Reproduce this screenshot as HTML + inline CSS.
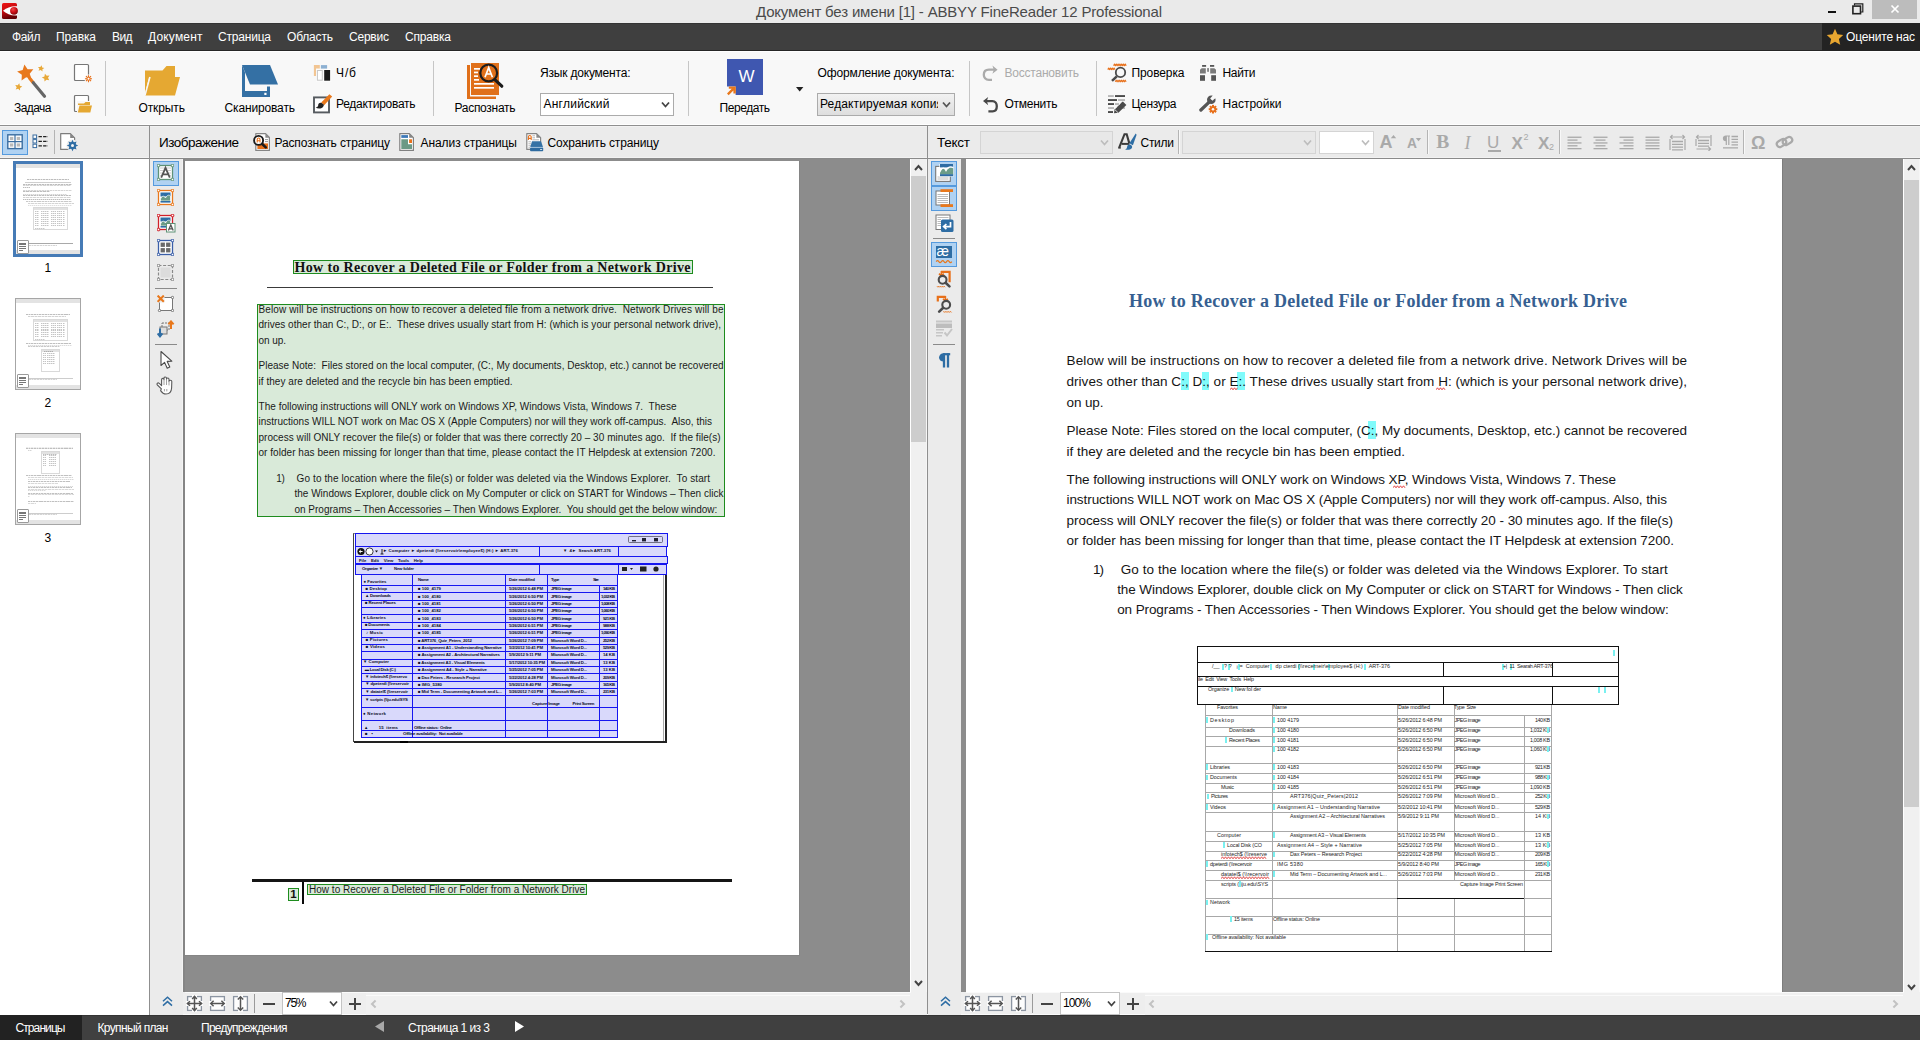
<!DOCTYPE html>
<html><head><meta charset="utf-8"><title>ABBYY FineReader 12 Professional</title>
<style>
html,body{margin:0;padding:0;}
body{width:1920px;height:1040px;overflow:hidden;position:relative;background:#fff;font-family:"Liberation Sans",sans-serif;font-size:13px;}
div,span.t,svg{position:absolute;}
span.t{white-space:pre;}
</style></head>
<body>
<div style="left:0px;top:0px;width:1920px;height:23px;background:#eaeaea;"></div>
<div style="left:0px;top:23px;width:1920px;height:28px;background:#3f3f3f;"></div>
<div style="left:0px;top:23px;width:1920px;height:1px;background:#343434;"></div>
<div style="left:0px;top:50px;width:1920px;height:1px;background:#262626;"></div>
<div style="left:0px;top:51px;width:1920px;height:74px;background:#f8f8f8;"></div>
<div style="left:0px;top:51px;width:1920px;height:1px;background:#ffffff;"></div>
<div style="left:0px;top:124px;width:1920px;height:1px;background:#ffffff;"></div>
<div style="left:0px;top:125px;width:1920px;height:1px;background:#8f8f8f;"></div>
<div style="left:0px;top:126px;width:1920px;height:31px;background:#ebebeb;"></div>
<div style="left:0px;top:126px;width:1920px;height:1px;background:#f2f2f2;"></div>
<div style="left:0px;top:157px;width:1920px;height:1px;background:#f2f2f2;"></div>
<div style="left:0px;top:158px;width:1920px;height:1px;background:#8a8a8a;"></div>
<svg style="left:2px;top:3px;" width="17" height="17" viewBox="0 0 17 17"><defs><linearGradient id="ai" x1="0" y1="0" x2="0.3" y2="1"><stop offset="0" stop-color="#f01414"/><stop offset="0.55" stop-color="#c00a0e"/><stop offset="1" stop-color="#620004"/></linearGradient><radialGradient id="ab" cx="0.38" cy="0.3" r="0.75"><stop offset="0" stop-color="#f04a4a"/><stop offset="0.5" stop-color="#d01018"/><stop offset="1" stop-color="#7a0206"/></radialGradient></defs>
<rect x="0" y="0" width="15" height="16" rx="1.6" fill="url(#ai)"/>
<path d="M1 7.7C5 4.4,9 2.9,15.2 3.2V12.4C9 12.8,5 11,1 7.7Z" fill="#fff"/>
<circle cx="12" cy="7.8" r="3.9" fill="url(#ab)"/></svg>
<span id="t1" class="t" style="left:756px;top:2px;font-size:15px;line-height:19px;color:#4a4a4a;letter-spacing:-0.177px;">Документ без имени [1] - ABBYY FineReader 12 Professional</span>
<div style="left:1828px;top:11px;width:8px;height:2px;background:#111;"></div>
<svg style="left:1852px;top:3px;" width="12" height="12" viewBox="0 0 12 12"><path d="M2.5 2.5V0.8H10.8V9H9" fill="none" stroke="#222" stroke-width="1.2"/><rect x="0.9" y="3.1" width="7.6" height="7.6" fill="none" stroke="#222" stroke-width="1.6"/></svg>
<div style="left:1872px;top:0px;width:45px;height:19px;background:#bcbcbc;"></div>
<svg style="left:1890px;top:4px;" width="11" height="11" viewBox="0 0 11 11"><path d="M1.5 1.5L8.5 8.5M8.5 1.5L1.5 8.5" stroke="#fff" stroke-width="1.7" fill="none"/></svg>
<span id="t2" class="t" style="left:12px;top:29px;font-size:12px;line-height:16px;color:#fff;letter-spacing:-0.339px;">Файл</span>
<span id="t3" class="t" style="left:56px;top:29px;font-size:12px;line-height:16px;color:#fff;letter-spacing:-0.109px;">Правка</span>
<span id="t4" class="t" style="left:112px;top:29px;font-size:12px;line-height:16px;color:#fff;letter-spacing:-0.609px;">Вид</span>
<span id="t5" class="t" style="left:148px;top:29px;font-size:12px;line-height:16px;color:#fff;letter-spacing:0.181px;">Документ</span>
<span id="t6" class="t" style="left:218px;top:29px;font-size:12px;line-height:16px;color:#fff;letter-spacing:-0.199px;">Страница</span>
<span id="t7" class="t" style="left:287px;top:29px;font-size:12px;line-height:16px;color:#fff;letter-spacing:-0.182px;">Область</span>
<span id="t8" class="t" style="left:349px;top:29px;font-size:12px;line-height:16px;color:#fff;letter-spacing:-0.219px;">Сервис</span>
<span id="t9" class="t" style="left:405px;top:29px;font-size:12px;line-height:16px;color:#fff;letter-spacing:-0.180px;">Справка</span>
<div style="left:1822px;top:23px;width:98px;height:28px;background:#232323;"></div>
<svg style="left:1826px;top:28px;" width="18" height="18" viewBox="0 0 18 18"><path d="M9 0.8L11.4 6.3L17.2 6.9L12.9 10.9L14.2 16.8L9 13.7L3.8 16.8L5.1 10.9L0.8 6.9L6.6 6.3Z" fill="#e8a630"/></svg>
<span id="t10" class="t" style="left:1846px;top:29px;font-size:12px;line-height:16px;color:#fff;letter-spacing:-0.175px;">Оцените нас</span>
<div style="left:105px;top:61px;width:1px;height:55px;background:#c6c6c6;"></div>
<div style="left:433px;top:61px;width:1px;height:55px;background:#c6c6c6;"></div>
<div style="left:688px;top:61px;width:1px;height:55px;background:#c6c6c6;"></div>
<div style="left:969px;top:61px;width:1px;height:55px;background:#c6c6c6;"></div>
<div style="left:1096px;top:61px;width:1px;height:55px;background:#c6c6c6;"></div>
<span id="t11" class="t" style="left:14px;top:100px;font-size:12px;line-height:16px;color:#000;letter-spacing:-0.553px;">Задача</span>
<span id="t12" class="t" style="left:138.5px;top:100px;font-size:12px;line-height:16px;color:#000;letter-spacing:-0.107px;">Открыть</span>
<span id="t13" class="t" style="left:224.5px;top:100px;font-size:12px;line-height:16px;color:#000;letter-spacing:-0.144px;">Сканировать</span>
<span id="t14" class="t" style="left:454.5px;top:100px;font-size:12px;line-height:16px;color:#000;letter-spacing:-0.290px;">Распознать</span>
<span id="t15" class="t" style="left:719.5px;top:100px;font-size:12px;line-height:16px;color:#000;letter-spacing:-0.435px;">Передать</span>
<span id="t16" class="t" style="left:336px;top:65px;font-size:12px;line-height:16px;color:#000;letter-spacing:0.891px;">Ч/б</span>
<span id="t17" class="t" style="left:336px;top:96px;font-size:12px;line-height:16px;color:#000;letter-spacing:-0.284px;">Редактировать</span>
<span id="t18" class="t" style="left:540px;top:65px;font-size:12px;line-height:16px;color:#000;letter-spacing:-0.195px;">Язык документа:</span>
<span id="t19" class="t" style="left:817.5px;top:65px;font-size:12px;line-height:16px;color:#000;letter-spacing:-0.134px;">Оформление документа:</span>
<span id="t20" class="t" style="left:1004.5px;top:65px;font-size:12px;line-height:16px;color:#ababab;letter-spacing:-0.213px;">Восстановить</span>
<span id="t21" class="t" style="left:1004.5px;top:96px;font-size:12px;line-height:16px;color:#000;letter-spacing:-0.263px;">Отменить</span>
<span id="t22" class="t" style="left:1131.5px;top:65px;font-size:12px;line-height:16px;color:#000;letter-spacing:-0.107px;">Проверка</span>
<span id="t23" class="t" style="left:1131.5px;top:96px;font-size:12px;line-height:16px;color:#000;letter-spacing:-0.294px;">Цензура</span>
<span id="t24" class="t" style="left:1222.5px;top:65px;font-size:12px;line-height:16px;color:#000;letter-spacing:-0.312px;">Найти</span>
<span id="t25" class="t" style="left:1222.5px;top:96px;font-size:12px;line-height:16px;color:#000;letter-spacing:0.020px;">Настройки</span>
<div style="left:540px;top:93px;width:134px;height:23px;background:#fff;border:1px solid #ababab;box-sizing:border-box;"></div>
<span id="t26" class="t" style="left:543.5px;top:96px;font-size:12px;line-height:16px;color:#000;letter-spacing:0.243px;">Английский</span>
<svg style="left:661px;top:101px;" width="9" height="8" viewBox="0 0 9 8"><path d="M1 1.5L4.5 5.5L8 1.5" fill="none" stroke="#444" stroke-width="1.8"/></svg>
<div style="left:817px;top:93px;width:138px;height:23px;background:linear-gradient(#f2f2f2,#dedede);border:1px solid #ababab;box-sizing:border-box;"></div>
<div style="left:820px;top:95px;width:118px;height:18px;overflow:hidden;background:none">
<span id="t27" class="t" style="left:0px;top:1px;font-size:12px;line-height:16px;color:#000;letter-spacing:0.125px;">Редактируемая копия</span>
</div>
<svg style="left:942px;top:101px;" width="9" height="8" viewBox="0 0 9 8"><path d="M1 1.5L4.5 5.5L8 1.5" fill="none" stroke="#555" stroke-width="1.8"/></svg>
<svg style="left:10px;top:60px;" width="42" height="42" viewBox="0 0 42 42"><path d="M14.40 4.48L17.57 9.29L23.33 9.23L19.74 13.73L21.57 19.19L16.18 17.16L11.56 20.59L11.83 14.84L7.13 11.51L12.68 9.98Z" fill="#e8781c"/>
<path d="M31.59 5.15L32.15 7.39L34.37 8.03L32.41 9.25L32.49 11.56L30.72 10.08L28.55 10.86L29.42 8.72L28.00 6.90L30.30 7.06Z" fill="#e8a838"/><path d="M34.91 13.64L36.72 15.83L39.52 15.41L38.00 17.80L39.26 20.34L36.52 19.63L34.49 21.62L34.32 18.79L31.81 17.48L34.45 16.44Z" fill="#e8a838"/><path d="M9.29 23.28L9.84 25.80L12.28 26.60L10.06 27.90L10.05 30.47L8.13 28.76L5.68 29.54L6.71 27.19L5.21 25.10L7.77 25.36Z" fill="#e8a838"/>
<path d="M19 17.5L23.5 23" stroke="#e8781c" stroke-width="3.2"/><path d="M23.3 22.7L34.5 36.2" stroke="#666" stroke-width="3.2" stroke-linecap="round"/></svg>
<svg style="left:73px;top:63px;" width="20" height="20" viewBox="0 0 20 20"><rect x="1.5" y="1.5" width="14" height="16" rx="1" fill="#fff" stroke="#777" stroke-width="1.2"/><circle cx="15.5" cy="15.7" r="4.2" fill="#f8f8f8"/><g stroke="#e8701a" stroke-width="1.1"><path d="M15.5 12.2V19.2M12 15.7H19M13 13.2L18 18.2M18 13.2L13 18.2"/></g><circle cx="15.5" cy="15.7" r="1.5" fill="#fff" stroke="#e8701a" stroke-width="1"/></svg>
<svg style="left:73px;top:94px;" width="20" height="20" viewBox="0 0 20 20"><rect x="1.5" y="1.5" width="14" height="16" rx="1" fill="#fff" stroke="#777" stroke-width="1.2"/><rect x="4" y="7" width="16" height="12" fill="#f8f8f8"/><path d="M5 9.5H11L12.5 8H17V11H5Z" fill="#e5a832"/><path d="M6.5 11.5H19L17.3 18.5H4.8Z" fill="#e5a832"/></svg>
<svg style="left:144px;top:65px;" width="38" height="32" viewBox="0 0 38 32"><path d="M1 5.5H18.5L22.5 1H31V12H1Z" fill="#e5a832"/><path d="M1 12V28L5 12Z" fill="#e5a832"/><path d="M6 12H36L31 30.6H1Z" fill="#e5a832"/><path d="M1 30.6L6 12" stroke="#f8f8f8" stroke-width="1.4"/></svg>
<svg style="left:241px;top:64px;" width="40" height="35" viewBox="0 0 40 35"><path d="M1 1H29L37 20.5H9Z" fill="#3470a4"/><path d="M1 1V33H29V22.5H26V27H4V8.5Z" fill="#3470a4"/><rect x="23.3" y="28.8" width="2.2" height="2.2" fill="#fff"/></svg>
<svg style="left:312px;top:64px;" width="20" height="18" viewBox="0 0 20 18"><path d="M1.9 1.1H7.8V4.6H4V11.9H1.9Z" fill="#f2c592"/><rect x="8.9" y="1.1" width="6.2" height="3.5" fill="#8cb0d2"/><rect x="4" y="5" width="15.2" height="12.8" fill="#fcfcfc"/><rect x="5.4" y="6.5" width="4.9" height="9.7" fill="#fff" stroke="#c6c6c6" stroke-width="1"/><rect x="12.2" y="6" width="5.9" height="10.7" fill="#1a1a1a"/></svg>
<svg style="left:312px;top:94px;" width="21" height="20" viewBox="0 0 21 20"><rect x="2" y="3.4" width="15" height="15" fill="#fff" stroke="#565b60" stroke-width="1.9"/><path d="M17.4 0.2L20.2 2.6L12.2 11.2L9.2 8.6Z" fill="#e8781c"/><path d="M9.6 8.9C7.4 8.4 6.1 9.8 6.2 11.2C6.2 12.6 5 13.2 3.6 13.4C5.6 15 9.2 14.8 10.8 13.2C11.9 12.1 12 10.8 11.7 10.6Z" fill="#222"/></svg>
<svg style="left:466px;top:62px;" width="40" height="40" viewBox="0 0 40 40"><path d="M1 3V37H30V34.5H4V3Z" fill="#e0701a"/><rect x="5" y="1" width="28" height="32" fill="#e0701a"/><rect x="8" y="6" width="6" height="1.7" fill="#fff"/><rect x="8" y="9.6" width="4" height="1.7" fill="#fff"/><rect x="8" y="13.3" width="4" height="1.7" fill="#fff"/><rect x="8" y="17" width="5" height="1.7" fill="#fff"/><rect x="8" y="21" width="20" height="1.7" fill="#fff"/><rect x="8" y="25" width="20" height="1.7" fill="#fff"/><circle cx="22.7" cy="11" r="8.4" fill="#e0701a" stroke="#1c1c1c" stroke-width="2.2"/><path d="M19 15.3L22.7 5.6L26.4 15.3M20.4 12H25" stroke="#fff" stroke-width="1.7" fill="none"/><path d="M28.8 17.6L35.8 24.2" stroke="#1c1c1c" stroke-width="3.2" stroke-linecap="round"/></svg>
<svg style="left:727px;top:59px;" width="37" height="37" viewBox="0 0 37 37"><rect x="0" y="0" width="36" height="36" fill="#3f57b0"/><rect x="0" y="27.5" width="8.6" height="8.6" fill="#f8f8f8"/><path d="M0.8 35.4L7 29.2M1.8 28.6H7.6V34.4" stroke="#e8781c" stroke-width="2.4" fill="none"/></svg>
<span id="t28" class="t" style="left:738.5px;top:66.5px;font-size:17px;line-height:20px;color:#fff;letter-spacing:-2.047px;">W</span>
<svg style="left:795px;top:86px;" width="10" height="7" viewBox="0 0 10 7"><path d="M1 1H8.4L4.7 5.4Z" fill="#222"/></svg>
<svg style="left:982px;top:64px;" width="17" height="19" viewBox="0 0 17 19"><path d="M10 15.8H6.9C3.4 15.8 1.8 13.2 1.8 10.7C1.8 8.1 3.4 5.7 6.9 5.7H13.6" fill="none" stroke="#ababab" stroke-width="2.3"/><path d="M10.4 1.6L15.6 5.7L10.4 9.8L11.8 5.7Z" fill="#ababab"/></svg>
<svg style="left:982px;top:95px;" width="17" height="19" viewBox="0 0 17 19"><path d="M6.4 16.3H10.6C13.6 16.3 14.8 13.8 14.8 11.2C14.8 8.6 13.4 6.1 10.4 6.1H3" fill="none" stroke="#484848" stroke-width="2.3"/><path d="M6.2 2L1 6.1L6.2 10.2L4.8 6.1Z" fill="#484848"/></svg>
<svg style="left:1107px;top:63px;" width="21" height="20" viewBox="0 0 21 20"><path d="M6.6 2.7L7.5 1.1L8.4 2.7L9.3 1.1L10.2 2.7L11.1 1.1L12.0 2.7L12.9 1.1L13.8 2.7L14.7 1.1L15.6 2.7L16.5 1.1L17.4 2.7L18.3 1.1L19.2 2.7M0.8 6.6L1.7 5.0L2.6 6.6L3.5 5.0L4.4 6.6L5.3 5.0L6.2 6.6L7.1 5.0L8.0 6.6M8.3 18.8L9.2 17.2L10.1 18.8L11.0 17.2L11.9 18.8L12.8 17.2L13.7 18.8L14.6 17.2L15.5 18.8L16.4 17.2L17.3 18.8L18.2 17.2L19.1 18.8" stroke="#e8701a" stroke-width="1.15" fill="none" stroke-linejoin="round"/><circle cx="13.5" cy="9.4" r="4.7" fill="#f8f8f8" stroke="#4a4a4a" stroke-width="1.8"/><path d="M9.8 13.3L5 17.9" stroke="#4a4a4a" stroke-width="2.5"/></svg>
<svg style="left:1107px;top:94px;" width="21" height="20" viewBox="0 0 21 20"><g fill="#4a4a4a"><rect x="8" y="1.1" width="10" height="1.9"/><rect x="1" y="5.1" width="9" height="1.9"/><rect x="1" y="9.1" width="6" height="1.9"/><rect x="1" y="17.1" width="5" height="1.9"/></g><g fill="#b8b8b8"><rect x="1" y="1.1" width="5.8" height="1.9"/><rect x="11" y="5.1" width="7" height="1.9"/><rect x="8" y="9.1" width="4" height="1.9"/><rect x="1" y="13.1" width="6" height="1.9"/><rect x="15" y="13.1" width="3" height="1.9"/></g><path d="M15.6 7.2L19.4 11L11.4 18.8L7 19.2L7.6 15.2Z" fill="#4a4a4a"/><path d="M7.6 15.2L15.6 7.2" stroke="#f8f8f8" stroke-width="1" stroke-dasharray="1.2 0.8"/><path d="M7.8 15.6L11 18.6" stroke="#f8f8f8" stroke-width=".8"/></svg>
<svg style="left:1199px;top:64px;" width="19" height="18" viewBox="0 0 19 18"><g fill="#555"><rect x="3.1" y="1" width="4" height="1.8"/><rect x="11" y="1" width="4.2" height="1.8"/><rect x="1" y="11.2" width="5" height="5.6"/><rect x="12.2" y="11.2" width="4.8" height="5.6"/></g><g fill="#7a7a7a"><path d="M1 5.8L2.6 4.3H6.8V9.6H1Z"/><path d="M11.2 4.3H15.4L17 5.8V9.6H11.2Z"/><rect x="8.2" y="4.1" width="1.7" height="3.7"/></g></svg>
<svg style="left:1199px;top:94px;" width="20" height="20" viewBox="0 0 20 20"><path d="M1.9 16L9.6 8.6" stroke="#555" stroke-width="3.3" stroke-linecap="round"/><circle cx="12.3" cy="5.8" r="4.3" fill="#555"/><path d="M12.3 5.8L15.6 -0.4L19.6 3.2Z" fill="#f8f8f8"/><rect x="-1.7" y="-5.4" width="3.4" height="5.6" transform="translate(12.5 5.4) rotate(42)" fill="#f8f8f8"/><g transform="translate(14 15.2)" fill="#e8701a"><rect x="-1" y="-4.3" width="2" height="8.6" transform="rotate(0)"/><rect x="-1" y="-4.3" width="2" height="8.6" transform="rotate(45)"/><rect x="-1" y="-4.3" width="2" height="8.6" transform="rotate(90)"/><rect x="-1" y="-4.3" width="2" height="8.6" transform="rotate(135)"/><circle r="3"/><circle r="1.25" fill="#f8f8f8"/></g></svg>
<div style="left:0px;top:159px;width:149px;height:856px;background:#fff;"></div>
<div style="left:149px;top:126px;width:1px;height:889px;background:#8f8f8f;"></div>
<div style="left:150px;top:159px;width:33px;height:833px;background:#ebebeb;"></div>
<div style="left:182px;top:159px;width:1px;height:833px;background:#f3f3f3;"></div>
<div style="left:183px;top:159px;width:2px;height:833px;background:#858585;"></div>
<div style="left:185px;top:159px;width:725px;height:833px;background:#8c8c8c;"></div>
<div style="left:185px;top:161px;width:614px;height:794px;background:#fff;"></div>
<div style="left:799px;top:161px;width:1px;height:795px;background:#858585;"></div>
<div style="left:185px;top:955px;width:615px;height:1px;background:#858585;"></div>
<div style="left:910px;top:159px;width:1px;height:833px;background:#fff;"></div>
<div style="left:911px;top:159px;width:15px;height:833px;background:#f0f0f0;"></div>
<div style="left:911px;top:176px;width:15px;height:266px;background:#cdcdcd;"></div>
<div style="left:926px;top:159px;width:1px;height:833px;background:#f6f6f6;"></div>
<div style="left:927px;top:126px;width:1px;height:889px;background:#8f8f8f;"></div>
<div style="left:928px;top:159px;width:33px;height:833px;background:#ebebeb;"></div>
<div style="left:961px;top:159px;width:5px;height:833px;background:#8c8c8c;"></div>
<div style="left:966px;top:159px;width:816px;height:833px;background:#fff;"></div>
<div style="left:1782px;top:159px;width:1px;height:833px;background:#7c7c7c;"></div>
<div style="left:1783px;top:159px;width:120px;height:833px;background:#8c8c8c;"></div>
<div style="left:1903px;top:159px;width:1px;height:833px;background:#fff;"></div>
<div style="left:1904px;top:159px;width:15px;height:833px;background:#f0f0f0;"></div>
<div style="left:1904px;top:180px;width:15px;height:627px;background:#cdcdcd;"></div>
<div style="left:1919px;top:159px;width:1px;height:833px;background:#f6f6f6;"></div>
<svg style="left:914px;top:164px;" width="9" height="8" viewBox="0 0 9 8"><path d="M1 6L4.5 2L8 6" fill="none" stroke="#444" stroke-width="2"/></svg>
<svg style="left:914px;top:979px;" width="9" height="8" viewBox="0 0 9 8"><path d="M1 2L4.5 6L8 2" fill="none" stroke="#444" stroke-width="2"/></svg>
<svg style="left:1907px;top:164px;" width="9" height="8" viewBox="0 0 9 8"><path d="M1 6L4.5 2L8 6" fill="none" stroke="#444" stroke-width="2"/></svg>
<svg style="left:1907px;top:983px;" width="9" height="8" viewBox="0 0 9 8"><path d="M1 2L4.5 6L8 2" fill="none" stroke="#444" stroke-width="2"/></svg>
<div style="left:150px;top:992px;width:1770px;height:23px;background:#eeeeee;"></div>
<div style="left:150px;top:1014px;width:1770px;height:1px;background:#fafafa;"></div>
<div style="left:150px;top:992px;width:33px;height:23px;background:#ebebeb;"></div>
<div style="left:928px;top:992px;width:33px;height:23px;background:#ebebeb;"></div>
<div style="left:366px;top:992px;width:561px;height:23px;background:#f0f0f0;"></div>
<div style="left:1145px;top:992px;width:775px;height:23px;background:#f0f0f0;"></div>
<div style="left:185px;top:992px;width:726px;height:1px;background:#fafafa;"></div>
<div style="left:966px;top:992px;width:938px;height:1px;background:#fafafa;"></div>
<div style="left:366px;top:995px;width:544px;height:1px;background:#fafafa;"></div>
<div style="left:1145px;top:995px;width:758px;height:1px;background:#fafafa;"></div>
<svg style="left:162px;top:996px;" width="11" height="11" viewBox="0 0 11 11"><path d="M1 5.2L5.5 1.2L10 5.2M1 9.6L5.5 5.6L10 9.6" fill="none" stroke="#2e6da4" stroke-width="1.5"/></svg>
<svg style="left:186px;top:995px;" width="17" height="17" viewBox="0 0 17 17"><rect x="1.6" y="1.6" width="13.8" height="13.8" fill="#fdfdfd" stroke="#8c95a2" stroke-width="1.3"/><rect x="6" y="0" width="5" height="17" fill="#fdfdfd"/><rect x="0" y="6" width="17" height="5" fill="#fdfdfd"/><path d="M8.5 1.5V15.5M1.5 8.5H15.5" fill="none" stroke="#555" stroke-width="1.5"/><path d="M6.2 4L8.5 1.4L10.8 4M6.2 13L8.5 15.6L10.8 13M4 6.2L1.4 8.5L4 10.8M13 6.2L15.6 8.5L13 10.8" fill="none" stroke="#555" stroke-width="1.5"/></svg>
<svg style="left:209px;top:995px;" width="17" height="17" viewBox="0 0 17 17"><rect x="1.6" y="1.6" width="13.8" height="13.8" fill="#fdfdfd" stroke="#8c95a2" stroke-width="1.3"/><rect x="0" y="6" width="17" height="5" fill="#fdfdfd"/><path d="M2 8.5H15" fill="none" stroke="#555" stroke-width="1.5"/><path d="M4.6 5.8L1.8 8.5L4.6 11.2M12.4 5.8L15.2 8.5L12.4 11.2" fill="none" stroke="#555" stroke-width="1.5"/></svg>
<svg style="left:232px;top:995px;" width="17" height="17" viewBox="0 0 17 17"><rect x="1.6" y="1.6" width="13.8" height="13.8" fill="#fdfdfd" stroke="#8c95a2" stroke-width="1.3"/><rect x="6" y="0" width="5" height="17" fill="#fdfdfd"/><path d="M8.5 2V15" fill="none" stroke="#555" stroke-width="1.5"/><path d="M5.8 4.6L8.5 1.8L11.2 4.6M5.8 12.4L8.5 15.2L11.2 12.4" fill="none" stroke="#555" stroke-width="1.5"/></svg>
<div style="left:254px;top:994px;width:1px;height:19px;background:#9a9a9a;"></div>
<div style="left:263px;top:1003px;width:12px;height:2px;background:#444;"></div>
<div style="left:282px;top:992px;width:60px;height:23px;background:#fff;border:1px solid #c4c4c4;box-sizing:border-box;"></div>
<span id="t29" class="t" style="left:285px;top:995px;font-size:12px;line-height:16px;color:#000;letter-spacing:-1.266px;">75%</span>
<svg style="left:329px;top:1000px;" width="9" height="8" viewBox="0 0 9 8"><path d="M1 1.5L4.5 5.5L8 1.5" fill="none" stroke="#444" stroke-width="1.8"/></svg>
<div style="left:349px;top:1003px;width:12px;height:2px;background:#444;"></div>
<div style="left:354px;top:998px;width:2px;height:12px;background:#444;"></div>
<svg style="left:370px;top:999px;" width="8" height="10" viewBox="0 0 8 10"><path d="M5.6 1.6L2 5L5.6 8.4" fill="none" stroke="#c2c2c2" stroke-width="2"/></svg>
<svg style="left:940px;top:996px;" width="11" height="11" viewBox="0 0 11 11"><path d="M1 5.2L5.5 1.2L10 5.2M1 9.6L5.5 5.6L10 9.6" fill="none" stroke="#2e6da4" stroke-width="1.5"/></svg>
<svg style="left:964px;top:995px;" width="17" height="17" viewBox="0 0 17 17"><rect x="1.6" y="1.6" width="13.8" height="13.8" fill="#fdfdfd" stroke="#8c95a2" stroke-width="1.3"/><rect x="6" y="0" width="5" height="17" fill="#fdfdfd"/><rect x="0" y="6" width="17" height="5" fill="#fdfdfd"/><path d="M8.5 1.5V15.5M1.5 8.5H15.5" fill="none" stroke="#555" stroke-width="1.5"/><path d="M6.2 4L8.5 1.4L10.8 4M6.2 13L8.5 15.6L10.8 13M4 6.2L1.4 8.5L4 10.8M13 6.2L15.6 8.5L13 10.8" fill="none" stroke="#555" stroke-width="1.5"/></svg>
<svg style="left:987px;top:995px;" width="17" height="17" viewBox="0 0 17 17"><rect x="1.6" y="1.6" width="13.8" height="13.8" fill="#fdfdfd" stroke="#8c95a2" stroke-width="1.3"/><rect x="0" y="6" width="17" height="5" fill="#fdfdfd"/><path d="M2 8.5H15" fill="none" stroke="#555" stroke-width="1.5"/><path d="M4.6 5.8L1.8 8.5L4.6 11.2M12.4 5.8L15.2 8.5L12.4 11.2" fill="none" stroke="#555" stroke-width="1.5"/></svg>
<svg style="left:1010px;top:995px;" width="17" height="17" viewBox="0 0 17 17"><rect x="1.6" y="1.6" width="13.8" height="13.8" fill="#fdfdfd" stroke="#8c95a2" stroke-width="1.3"/><rect x="6" y="0" width="5" height="17" fill="#fdfdfd"/><path d="M8.5 2V15" fill="none" stroke="#555" stroke-width="1.5"/><path d="M5.8 4.6L8.5 1.8L11.2 4.6M5.8 12.4L8.5 15.2L11.2 12.4" fill="none" stroke="#555" stroke-width="1.5"/></svg>
<div style="left:1032px;top:994px;width:1px;height:19px;background:#9a9a9a;"></div>
<div style="left:1041px;top:1003px;width:12px;height:2px;background:#444;"></div>
<div style="left:1060px;top:992px;width:60px;height:23px;background:#fff;border:1px solid #c4c4c4;box-sizing:border-box;"></div>
<span id="t30" class="t" style="left:1063px;top:995px;font-size:12px;line-height:16px;color:#000;letter-spacing:-0.901px;">100%</span>
<svg style="left:1107px;top:1000px;" width="9" height="8" viewBox="0 0 9 8"><path d="M1 1.5L4.5 5.5L8 1.5" fill="none" stroke="#444" stroke-width="1.8"/></svg>
<div style="left:1127px;top:1003px;width:12px;height:2px;background:#444;"></div>
<div style="left:1132px;top:998px;width:2px;height:12px;background:#444;"></div>
<svg style="left:1148px;top:999px;" width="8" height="10" viewBox="0 0 8 10"><path d="M5.6 1.6L2 5L5.6 8.4" fill="none" stroke="#c2c2c2" stroke-width="2"/></svg>
<div style="left:149px;top:992px;width:1px;height:22px;background:#8f8f8f;"></div>
<div style="left:927px;top:992px;width:1px;height:22px;background:#8f8f8f;"></div>
<svg style="left:898px;top:999px;" width="8" height="10" viewBox="0 0 8 10"><path d="M2.4 1.6L6 5L2.4 8.4" fill="none" stroke="#c2c2c2" stroke-width="2"/></svg>
<svg style="left:1891px;top:999px;" width="8" height="10" viewBox="0 0 8 10"><path d="M2.4 1.6L6 5L2.4 8.4" fill="none" stroke="#c2c2c2" stroke-width="2"/></svg>
<div style="left:0px;top:1015px;width:1920px;height:25px;background:#404040;"></div>
<div style="left:0px;top:1015px;width:1920px;height:1px;background:#343434;"></div>
<div style="left:0px;top:1015px;width:82px;height:25px;background:#222;"></div>
<span id="t31" class="t" style="left:15.5px;top:1020px;font-size:12px;line-height:16px;color:#fff;letter-spacing:-0.906px;">Страницы</span>
<span id="t32" class="t" style="left:97.5px;top:1020px;font-size:12px;line-height:16px;color:#fff;letter-spacing:-0.648px;">Крупный план</span>
<span id="t33" class="t" style="left:201px;top:1020px;font-size:12px;line-height:16px;color:#fff;letter-spacing:-0.727px;">Предупреждения</span>
<svg style="left:374px;top:1020px;" width="11" height="13" viewBox="0 0 11 13"><path d="M10 1V12L1 6.5Z" fill="#a8a8a8"/></svg>
<span id="t34" class="t" style="left:408px;top:1020px;font-size:12px;line-height:16px;color:#fff;letter-spacing:-0.568px;">Страница 1 из 3</span>
<svg style="left:514px;top:1020px;" width="11" height="13" viewBox="0 0 11 13"><path d="M1 1V12L10 6.5Z" fill="#fff"/></svg>
<div style="left:2px;top:130px;width:26px;height:25px;background:#b0d2f2;border:1px solid #559add;box-sizing:border-box;"></div>
<svg style="left:7px;top:134px;" width="16" height="16" viewBox="0 0 16 16"><rect x="0.8" y="0.8" width="14.4" height="13.8" fill="#fff" stroke="#3a6da0" stroke-width="1.4"/><path d="M8 1V14.6M1 7.7H15" stroke="#3a6da0" stroke-width="1.2"/><g fill="#b9b9b9"><rect x="2.9" y="2.9" width="3.4" height="3.2"/><rect x="9.7" y="2.9" width="3.4" height="3.2"/><rect x="2.9" y="9.4" width="3.4" height="3.2"/><rect x="9.7" y="9.4" width="3.4" height="3.2"/></g></svg>
<svg style="left:32px;top:134px;" width="17" height="15" viewBox="0 0 17 15"><g fill="#fff" stroke="#3a6da0" stroke-width="1"><rect x="1" y="1" width="3.6" height="3.4"/><rect x="1" y="5.6" width="3.6" height="3.4"/><rect x="1" y="10.2" width="3.6" height="3.4"/></g><g stroke="#222" stroke-width="1.2" stroke-dasharray="3.4 1.2"><path d="M6.5 2.7H16M6.5 7.3H16M6.5 11.9H16"/></g></svg>
<div style="left:54px;top:130px;width:1px;height:24px;background:#b4b4b4;"></div>
<svg style="left:59px;top:132px;" width="20" height="20" viewBox="0 0 20 20"><path d="M1.7 1.6H11.4L15.6 5.8V17.4H1.7Z" fill="#fff" stroke="#7c7c7c" stroke-width="1.2" stroke-linejoin="round"/><path d="M11.2 1.6V6H15.6Z" fill="#858585"/><circle cx="13.5" cy="13.5" r="6" fill="#ebebeb"/><g transform="translate(13.5 13.5)" fill="#2e6da4"><path d="M-1.3 -3L0 -5.7L1.3 -3V3L0 5.7L-1.3 3Z" transform="rotate(0)"/><path d="M-1.3 -3L0 -5.7L1.3 -3V3L0 5.7L-1.3 3Z" transform="rotate(45)"/><path d="M-1.3 -3L0 -5.7L1.3 -3V3L0 5.7L-1.3 3Z" transform="rotate(90)"/><path d="M-1.3 -3L0 -5.7L1.3 -3V3L0 5.7L-1.3 3Z" transform="rotate(135)"/><circle r="3.5"/><circle r="1.5" fill="#f4f4f4"/></g></svg>
<span id="t35" class="t" style="left:159px;top:134px;font-size:13.5px;line-height:18px;color:#000;letter-spacing:-0.505px;">Изображение</span>
<span id="t36" class="t" style="left:274.5px;top:135px;font-size:12px;line-height:16px;color:#000;letter-spacing:-0.138px;">Распознать страницу</span>
<span id="t37" class="t" style="left:420.5px;top:135px;font-size:12px;line-height:16px;color:#000;letter-spacing:-0.074px;">Анализ страницы</span>
<span id="t38" class="t" style="left:547.5px;top:135px;font-size:12px;line-height:16px;color:#000;letter-spacing:-0.148px;">Сохранить страницу</span>
<svg style="left:252px;top:132px;" width="20" height="20" viewBox="0 0 20 20"><path d="M3.8 1.7H13.6L17.4 5.5V18.4H3.8Z" fill="#fff" stroke="#858585" stroke-width="1.2" stroke-linejoin="round"/><path d="M13.4 1.7V5.7H17.4Z" fill="#8a8a8a"/><path d="M13 7.6H16M13 9.6H16" stroke="#9a9a9a" stroke-width="1"/><rect x="5.4" y="11.4" width="10.6" height="5.6" fill="#e8701a"/><circle cx="6.6" cy="8.4" r="4.5" fill="#fff" stroke="#1c1c1c" stroke-width="1.9"/><path d="M5.2 10.6V7.4C5.2 5.6 8 5.6 8 7.4V10.6M5.2 8.8H8" stroke="#e8701a" stroke-width="1.1" fill="none"/><path d="M10.2 12L13.8 15.4" stroke="#1c1c1c" stroke-width="2.6" stroke-linecap="round"/></svg>
<svg style="left:398px;top:132px;" width="18" height="20" viewBox="0 0 18 20"><path d="M1.8 1.6H11.4L15.4 5.6V18.4H1.8Z" fill="#fff" stroke="#808080" stroke-width="1.2" stroke-linejoin="round"/><path d="M11.2 1.6V5.8H15.4Z" fill="#858585"/><rect x="3.3" y="3.1" width="6.7" height="2.8" fill="#3e79b8"/><path d="M3.3 7.3H10V12.2H14V17H3.3Z" fill="#6b9985"/><rect x="11.1" y="7.3" width="2.9" height="3.7" fill="#e8701a"/></svg>
<svg style="left:525px;top:132px;" width="20" height="20" viewBox="0 0 20 20"><path d="M1.8 1.6H11.6L15.6 5.6V17.4H1.8Z" fill="#fff" stroke="#858585" stroke-width="1.2" stroke-linejoin="round"/><path d="M11.4 1.6V5.8H15.6Z" fill="#8a8a8a"/><path d="M3.4 8V4.9C3.4 3.1 6.2 3.1 6.2 4.9V8M3.4 6.4H6.2" stroke="#e8701a" stroke-width="1.1" fill="none"/><path d="M7.4 3.8H10M7.4 5.8H10M7.4 7.8H14M3.4 9.8H6M3.4 11.8H6M3.4 13.8H6M3.4 15.8H5" stroke="#b5b5b5" stroke-width="1"/><path d="M7 9.2H16L18 14.9H5.3Z" fill="#3572a5"/><rect x="5.3" y="14.9" width="12.7" height="1.2" fill="#9bbbd6"/><path d="M5.1 16.1H18.2V18.4Q18.2 19.2 17.4 19.2H5.9Q5.1 19.2 5.1 18.4Z" fill="#2e6ba0"/><rect x="15" y="17.2" width="2.2" height="0.9" rx=".4" fill="#fff"/></svg>
<div style="left:13px;top:161px;width:70px;height:96px;background:#467bb6;"></div>
<div style="left:16px;top:164px;width:64px;height:90px;background:#fff;"></div>
<div style="left:16px;top:164px;width:64px;height:4px;background:#e3e3e3;"></div>
<div style="left:16px;top:250px;width:64px;height:4px;background:#e3e3e3;"></div>
<div style="left:27px;top:179px;width:42px;height:1px;background:repeating-linear-gradient(90deg,rgba(60,60,60,0.34) 0 1.7px,rgba(60,60,60,0.15) 1.7px 2.7px);"></div>
<div style="left:24.5px;top:181.5px;width:46.5px;height:1px;background:#cfcfcf;"></div>
<div style="left:23px;top:184px;width:49px;height:1px;background:repeating-linear-gradient(90deg,rgba(60,60,60,0.34) 0 1.7px,rgba(60,60,60,0.15) 1.7px 2.7px);"></div>
<div style="left:23px;top:185px;width:48px;height:1px;background:repeating-linear-gradient(90deg,rgba(60,60,60,0.22) 0 2.4px,rgba(60,60,60,0.10) 2.4px 3.4px);"></div>
<div style="left:23px;top:187px;width:7px;height:1px;background:repeating-linear-gradient(90deg,rgba(60,60,60,0.34) 0 1.0px,rgba(60,60,60,0.15) 1.0px 2.0px);"></div>
<div style="left:23px;top:190px;width:49px;height:1px;background:repeating-linear-gradient(90deg,rgba(60,60,60,0.22) 0 1.7px,rgba(60,60,60,0.10) 1.7px 2.7px);"></div>
<div style="left:23px;top:191px;width:27px;height:1px;background:repeating-linear-gradient(90deg,rgba(60,60,60,0.34) 0 2.4px,rgba(60,60,60,0.15) 2.4px 3.4px);"></div>
<div style="left:23px;top:194px;width:44px;height:1px;background:repeating-linear-gradient(90deg,rgba(60,60,60,0.22) 0 1.0px,rgba(60,60,60,0.10) 1.0px 2.0px);"></div>
<div style="left:23px;top:195px;width:48px;height:1px;background:repeating-linear-gradient(90deg,rgba(60,60,60,0.34) 0 1.7px,rgba(60,60,60,0.15) 1.7px 2.7px);"></div>
<div style="left:23px;top:197px;width:48px;height:1px;background:repeating-linear-gradient(90deg,rgba(60,60,60,0.22) 0 2.4px,rgba(60,60,60,0.10) 2.4px 3.4px);"></div>
<div style="left:23px;top:199px;width:48px;height:1px;background:repeating-linear-gradient(90deg,rgba(60,60,60,0.34) 0 1.0px,rgba(60,60,60,0.15) 1.0px 2.0px);"></div>
<div style="left:26px;top:201px;width:46px;height:1px;background:repeating-linear-gradient(90deg,rgba(60,60,60,0.28) 0 1.7px,rgba(60,60,60,0.12) 1.7px 2.7px);"></div>
<div style="left:27.5px;top:203px;width:46px;height:1px;background:repeating-linear-gradient(90deg,rgba(60,60,60,0.22) 0 2.4px,rgba(60,60,60,0.10) 2.4px 3.4px);"></div>
<div style="left:27.5px;top:205px;width:44px;height:1px;background:repeating-linear-gradient(90deg,rgba(60,60,60,0.17) 0 1.0px,rgba(60,60,60,0.07) 1.0px 2.0px);"></div>
<div style="left:33px;top:207px;width:34.5px;height:22.5px;background:#fff;border:1px solid #d9d9d9;box-sizing:border-box;"></div>
<div style="left:34px;top:208px;width:32.5px;height:2px;background:#e2e2e2;"></div>
<div style="left:35px;top:211px;width:4px;height:1px;background:repeating-linear-gradient(90deg,rgba(60,60,60,0.30) 0 1.0px,rgba(60,60,60,0.14) 1.0px 2.0px);"></div>
<div style="left:41px;top:211px;width:8px;height:1px;background:repeating-linear-gradient(90deg,rgba(60,60,60,0.30) 0 1.0px,rgba(60,60,60,0.14) 1.0px 2.0px);"></div>
<div style="left:51px;top:211px;width:5px;height:1px;background:repeating-linear-gradient(90deg,rgba(60,60,60,0.30) 0 1.0px,rgba(60,60,60,0.14) 1.0px 2.0px);"></div>
<div style="left:57px;top:211px;width:5px;height:1px;background:repeating-linear-gradient(90deg,rgba(60,60,60,0.30) 0 1.0px,rgba(60,60,60,0.14) 1.0px 2.0px);"></div>
<div style="left:63px;top:211px;width:2px;height:1px;background:repeating-linear-gradient(90deg,rgba(60,60,60,0.30) 0 1.0px,rgba(60,60,60,0.14) 1.0px 2.0px);"></div>
<div style="left:35px;top:213px;width:4px;height:1px;background:repeating-linear-gradient(90deg,rgba(60,60,60,0.30) 0 1.0px,rgba(60,60,60,0.14) 1.0px 2.0px);"></div>
<div style="left:41px;top:213px;width:8px;height:1px;background:repeating-linear-gradient(90deg,rgba(60,60,60,0.30) 0 1.0px,rgba(60,60,60,0.14) 1.0px 2.0px);"></div>
<div style="left:51px;top:213px;width:5px;height:1px;background:repeating-linear-gradient(90deg,rgba(60,60,60,0.30) 0 1.0px,rgba(60,60,60,0.14) 1.0px 2.0px);"></div>
<div style="left:57px;top:213px;width:5px;height:1px;background:repeating-linear-gradient(90deg,rgba(60,60,60,0.30) 0 1.0px,rgba(60,60,60,0.14) 1.0px 2.0px);"></div>
<div style="left:63px;top:213px;width:2px;height:1px;background:repeating-linear-gradient(90deg,rgba(60,60,60,0.30) 0 1.0px,rgba(60,60,60,0.14) 1.0px 2.0px);"></div>
<div style="left:35px;top:215px;width:4px;height:1px;background:repeating-linear-gradient(90deg,rgba(60,60,60,0.30) 0 1.0px,rgba(60,60,60,0.14) 1.0px 2.0px);"></div>
<div style="left:41px;top:215px;width:8px;height:1px;background:repeating-linear-gradient(90deg,rgba(60,60,60,0.30) 0 1.0px,rgba(60,60,60,0.14) 1.0px 2.0px);"></div>
<div style="left:51px;top:215px;width:5px;height:1px;background:repeating-linear-gradient(90deg,rgba(60,60,60,0.30) 0 1.0px,rgba(60,60,60,0.14) 1.0px 2.0px);"></div>
<div style="left:57px;top:215px;width:5px;height:1px;background:repeating-linear-gradient(90deg,rgba(60,60,60,0.30) 0 1.0px,rgba(60,60,60,0.14) 1.0px 2.0px);"></div>
<div style="left:63px;top:215px;width:2px;height:1px;background:repeating-linear-gradient(90deg,rgba(60,60,60,0.30) 0 1.0px,rgba(60,60,60,0.14) 1.0px 2.0px);"></div>
<div style="left:35px;top:217px;width:4px;height:1px;background:repeating-linear-gradient(90deg,rgba(60,60,60,0.30) 0 1.0px,rgba(60,60,60,0.14) 1.0px 2.0px);"></div>
<div style="left:41px;top:217px;width:8px;height:1px;background:repeating-linear-gradient(90deg,rgba(60,60,60,0.30) 0 1.0px,rgba(60,60,60,0.14) 1.0px 2.0px);"></div>
<div style="left:51px;top:217px;width:5px;height:1px;background:repeating-linear-gradient(90deg,rgba(60,60,60,0.30) 0 1.0px,rgba(60,60,60,0.14) 1.0px 2.0px);"></div>
<div style="left:57px;top:217px;width:5px;height:1px;background:repeating-linear-gradient(90deg,rgba(60,60,60,0.30) 0 1.0px,rgba(60,60,60,0.14) 1.0px 2.0px);"></div>
<div style="left:63px;top:217px;width:2px;height:1px;background:repeating-linear-gradient(90deg,rgba(60,60,60,0.30) 0 1.0px,rgba(60,60,60,0.14) 1.0px 2.0px);"></div>
<div style="left:35px;top:219px;width:4px;height:1px;background:repeating-linear-gradient(90deg,rgba(60,60,60,0.30) 0 1.0px,rgba(60,60,60,0.14) 1.0px 2.0px);"></div>
<div style="left:41px;top:219px;width:8px;height:1px;background:repeating-linear-gradient(90deg,rgba(60,60,60,0.30) 0 1.0px,rgba(60,60,60,0.14) 1.0px 2.0px);"></div>
<div style="left:51px;top:219px;width:5px;height:1px;background:repeating-linear-gradient(90deg,rgba(60,60,60,0.30) 0 1.0px,rgba(60,60,60,0.14) 1.0px 2.0px);"></div>
<div style="left:57px;top:219px;width:5px;height:1px;background:repeating-linear-gradient(90deg,rgba(60,60,60,0.30) 0 1.0px,rgba(60,60,60,0.14) 1.0px 2.0px);"></div>
<div style="left:63px;top:219px;width:2px;height:1px;background:repeating-linear-gradient(90deg,rgba(60,60,60,0.30) 0 1.0px,rgba(60,60,60,0.14) 1.0px 2.0px);"></div>
<div style="left:35px;top:221px;width:4px;height:1px;background:repeating-linear-gradient(90deg,rgba(60,60,60,0.30) 0 1.0px,rgba(60,60,60,0.14) 1.0px 2.0px);"></div>
<div style="left:41px;top:221px;width:8px;height:1px;background:repeating-linear-gradient(90deg,rgba(60,60,60,0.30) 0 1.0px,rgba(60,60,60,0.14) 1.0px 2.0px);"></div>
<div style="left:51px;top:221px;width:5px;height:1px;background:repeating-linear-gradient(90deg,rgba(60,60,60,0.30) 0 1.0px,rgba(60,60,60,0.14) 1.0px 2.0px);"></div>
<div style="left:57px;top:221px;width:5px;height:1px;background:repeating-linear-gradient(90deg,rgba(60,60,60,0.30) 0 1.0px,rgba(60,60,60,0.14) 1.0px 2.0px);"></div>
<div style="left:63px;top:221px;width:2px;height:1px;background:repeating-linear-gradient(90deg,rgba(60,60,60,0.30) 0 1.0px,rgba(60,60,60,0.14) 1.0px 2.0px);"></div>
<div style="left:35px;top:223px;width:4px;height:1px;background:repeating-linear-gradient(90deg,rgba(60,60,60,0.30) 0 1.0px,rgba(60,60,60,0.14) 1.0px 2.0px);"></div>
<div style="left:41px;top:223px;width:8px;height:1px;background:repeating-linear-gradient(90deg,rgba(60,60,60,0.30) 0 1.0px,rgba(60,60,60,0.14) 1.0px 2.0px);"></div>
<div style="left:51px;top:223px;width:5px;height:1px;background:repeating-linear-gradient(90deg,rgba(60,60,60,0.30) 0 1.0px,rgba(60,60,60,0.14) 1.0px 2.0px);"></div>
<div style="left:57px;top:223px;width:5px;height:1px;background:repeating-linear-gradient(90deg,rgba(60,60,60,0.30) 0 1.0px,rgba(60,60,60,0.14) 1.0px 2.0px);"></div>
<div style="left:63px;top:223px;width:2px;height:1px;background:repeating-linear-gradient(90deg,rgba(60,60,60,0.30) 0 1.0px,rgba(60,60,60,0.14) 1.0px 2.0px);"></div>
<div style="left:35px;top:225px;width:4px;height:1px;background:repeating-linear-gradient(90deg,rgba(60,60,60,0.30) 0 1.0px,rgba(60,60,60,0.14) 1.0px 2.0px);"></div>
<div style="left:41px;top:225px;width:8px;height:1px;background:repeating-linear-gradient(90deg,rgba(60,60,60,0.30) 0 1.0px,rgba(60,60,60,0.14) 1.0px 2.0px);"></div>
<div style="left:51px;top:225px;width:5px;height:1px;background:repeating-linear-gradient(90deg,rgba(60,60,60,0.30) 0 1.0px,rgba(60,60,60,0.14) 1.0px 2.0px);"></div>
<div style="left:57px;top:225px;width:5px;height:1px;background:repeating-linear-gradient(90deg,rgba(60,60,60,0.30) 0 1.0px,rgba(60,60,60,0.14) 1.0px 2.0px);"></div>
<div style="left:63px;top:225px;width:2px;height:1px;background:repeating-linear-gradient(90deg,rgba(60,60,60,0.30) 0 1.0px,rgba(60,60,60,0.14) 1.0px 2.0px);"></div>
<div style="left:35px;top:228px;width:10px;height:1px;background:repeating-linear-gradient(90deg,rgba(60,60,60,0.28) 0 1.0px,rgba(60,60,60,0.12) 1.0px 2.0px);"></div>
<div style="left:29px;top:243.4px;width:44px;height:1px;background:#a9a9a9;"></div>
<div style="left:29px;top:245px;width:28px;height:1px;background:repeating-linear-gradient(90deg,rgba(60,60,60,0.22) 0 1.7px,rgba(60,60,60,0.10) 1.7px 2.7px);"></div>
<div style="left:16.5px;top:239.5px;width:12.5px;height:14.5px;background:#fff;border:1px solid #9a9a9a;box-sizing:border-box;border-radius:1px;"></div>
<div style="left:19px;top:242.5px;width:7px;height:2px;background:#777;"></div>
<div style="left:19px;top:246px;width:7px;height:1px;background:#777;"></div>
<div style="left:19px;top:248px;width:7px;height:1px;background:#777;"></div>
<div style="left:19px;top:250px;width:4px;height:1px;background:#777;"></div>
<div style="left:15px;top:298px;width:66px;height:92px;background:#fff;border:1px solid #a6a6a6;box-sizing:border-box;"></div>
<div style="left:16px;top:299px;width:64px;height:4px;background:#e3e3e3;"></div>
<div style="left:16px;top:385px;width:64px;height:4px;background:#e3e3e3;"></div>
<div style="left:26px;top:314px;width:44px;height:1px;background:repeating-linear-gradient(90deg,rgba(60,60,60,0.33) 0 1.7px,rgba(60,60,60,0.15) 1.7px 2.7px);"></div>
<div style="left:28px;top:316px;width:38px;height:1px;background:repeating-linear-gradient(90deg,rgba(60,60,60,0.23) 0 2.4px,rgba(60,60,60,0.10) 2.4px 3.4px);"></div>
<div style="left:33px;top:318.5px;width:34.5px;height:22.5px;background:#fff;border:1px solid #d9d9d9;box-sizing:border-box;"></div>
<div style="left:34px;top:319.5px;width:32.5px;height:2px;background:#e2e2e2;"></div>
<div style="left:35px;top:323px;width:4px;height:1px;background:repeating-linear-gradient(90deg,rgba(60,60,60,0.30) 0 1.0px,rgba(60,60,60,0.14) 1.0px 2.0px);"></div>
<div style="left:41px;top:323px;width:8px;height:1px;background:repeating-linear-gradient(90deg,rgba(60,60,60,0.30) 0 1.0px,rgba(60,60,60,0.14) 1.0px 2.0px);"></div>
<div style="left:51px;top:323px;width:5px;height:1px;background:repeating-linear-gradient(90deg,rgba(60,60,60,0.30) 0 1.0px,rgba(60,60,60,0.14) 1.0px 2.0px);"></div>
<div style="left:57px;top:323px;width:5px;height:1px;background:repeating-linear-gradient(90deg,rgba(60,60,60,0.30) 0 1.0px,rgba(60,60,60,0.14) 1.0px 2.0px);"></div>
<div style="left:63px;top:323px;width:2px;height:1px;background:repeating-linear-gradient(90deg,rgba(60,60,60,0.30) 0 1.0px,rgba(60,60,60,0.14) 1.0px 2.0px);"></div>
<div style="left:35px;top:325px;width:4px;height:1px;background:repeating-linear-gradient(90deg,rgba(60,60,60,0.30) 0 1.0px,rgba(60,60,60,0.14) 1.0px 2.0px);"></div>
<div style="left:41px;top:325px;width:8px;height:1px;background:repeating-linear-gradient(90deg,rgba(60,60,60,0.30) 0 1.0px,rgba(60,60,60,0.14) 1.0px 2.0px);"></div>
<div style="left:51px;top:325px;width:5px;height:1px;background:repeating-linear-gradient(90deg,rgba(60,60,60,0.30) 0 1.0px,rgba(60,60,60,0.14) 1.0px 2.0px);"></div>
<div style="left:57px;top:325px;width:5px;height:1px;background:repeating-linear-gradient(90deg,rgba(60,60,60,0.30) 0 1.0px,rgba(60,60,60,0.14) 1.0px 2.0px);"></div>
<div style="left:63px;top:325px;width:2px;height:1px;background:repeating-linear-gradient(90deg,rgba(60,60,60,0.30) 0 1.0px,rgba(60,60,60,0.14) 1.0px 2.0px);"></div>
<div style="left:35px;top:327px;width:4px;height:1px;background:repeating-linear-gradient(90deg,rgba(60,60,60,0.30) 0 1.0px,rgba(60,60,60,0.14) 1.0px 2.0px);"></div>
<div style="left:41px;top:327px;width:8px;height:1px;background:repeating-linear-gradient(90deg,rgba(60,60,60,0.30) 0 1.0px,rgba(60,60,60,0.14) 1.0px 2.0px);"></div>
<div style="left:51px;top:327px;width:5px;height:1px;background:repeating-linear-gradient(90deg,rgba(60,60,60,0.30) 0 1.0px,rgba(60,60,60,0.14) 1.0px 2.0px);"></div>
<div style="left:57px;top:327px;width:5px;height:1px;background:repeating-linear-gradient(90deg,rgba(60,60,60,0.30) 0 1.0px,rgba(60,60,60,0.14) 1.0px 2.0px);"></div>
<div style="left:63px;top:327px;width:2px;height:1px;background:repeating-linear-gradient(90deg,rgba(60,60,60,0.30) 0 1.0px,rgba(60,60,60,0.14) 1.0px 2.0px);"></div>
<div style="left:35px;top:329px;width:4px;height:1px;background:repeating-linear-gradient(90deg,rgba(60,60,60,0.30) 0 1.0px,rgba(60,60,60,0.14) 1.0px 2.0px);"></div>
<div style="left:41px;top:329px;width:8px;height:1px;background:repeating-linear-gradient(90deg,rgba(60,60,60,0.30) 0 1.0px,rgba(60,60,60,0.14) 1.0px 2.0px);"></div>
<div style="left:51px;top:329px;width:5px;height:1px;background:repeating-linear-gradient(90deg,rgba(60,60,60,0.30) 0 1.0px,rgba(60,60,60,0.14) 1.0px 2.0px);"></div>
<div style="left:57px;top:329px;width:5px;height:1px;background:repeating-linear-gradient(90deg,rgba(60,60,60,0.30) 0 1.0px,rgba(60,60,60,0.14) 1.0px 2.0px);"></div>
<div style="left:63px;top:329px;width:2px;height:1px;background:repeating-linear-gradient(90deg,rgba(60,60,60,0.30) 0 1.0px,rgba(60,60,60,0.14) 1.0px 2.0px);"></div>
<div style="left:35px;top:330px;width:4px;height:1px;background:repeating-linear-gradient(90deg,rgba(60,60,60,0.30) 0 1.0px,rgba(60,60,60,0.14) 1.0px 2.0px);"></div>
<div style="left:41px;top:330px;width:8px;height:1px;background:repeating-linear-gradient(90deg,rgba(60,60,60,0.30) 0 1.0px,rgba(60,60,60,0.14) 1.0px 2.0px);"></div>
<div style="left:51px;top:330px;width:5px;height:1px;background:repeating-linear-gradient(90deg,rgba(60,60,60,0.30) 0 1.0px,rgba(60,60,60,0.14) 1.0px 2.0px);"></div>
<div style="left:57px;top:330px;width:5px;height:1px;background:repeating-linear-gradient(90deg,rgba(60,60,60,0.30) 0 1.0px,rgba(60,60,60,0.14) 1.0px 2.0px);"></div>
<div style="left:63px;top:330px;width:2px;height:1px;background:repeating-linear-gradient(90deg,rgba(60,60,60,0.30) 0 1.0px,rgba(60,60,60,0.14) 1.0px 2.0px);"></div>
<div style="left:35px;top:332px;width:4px;height:1px;background:repeating-linear-gradient(90deg,rgba(60,60,60,0.30) 0 1.0px,rgba(60,60,60,0.14) 1.0px 2.0px);"></div>
<div style="left:41px;top:332px;width:8px;height:1px;background:repeating-linear-gradient(90deg,rgba(60,60,60,0.30) 0 1.0px,rgba(60,60,60,0.14) 1.0px 2.0px);"></div>
<div style="left:51px;top:332px;width:5px;height:1px;background:repeating-linear-gradient(90deg,rgba(60,60,60,0.30) 0 1.0px,rgba(60,60,60,0.14) 1.0px 2.0px);"></div>
<div style="left:57px;top:332px;width:5px;height:1px;background:repeating-linear-gradient(90deg,rgba(60,60,60,0.30) 0 1.0px,rgba(60,60,60,0.14) 1.0px 2.0px);"></div>
<div style="left:63px;top:332px;width:2px;height:1px;background:repeating-linear-gradient(90deg,rgba(60,60,60,0.30) 0 1.0px,rgba(60,60,60,0.14) 1.0px 2.0px);"></div>
<div style="left:35px;top:334px;width:4px;height:1px;background:repeating-linear-gradient(90deg,rgba(60,60,60,0.30) 0 1.0px,rgba(60,60,60,0.14) 1.0px 2.0px);"></div>
<div style="left:41px;top:334px;width:8px;height:1px;background:repeating-linear-gradient(90deg,rgba(60,60,60,0.30) 0 1.0px,rgba(60,60,60,0.14) 1.0px 2.0px);"></div>
<div style="left:51px;top:334px;width:5px;height:1px;background:repeating-linear-gradient(90deg,rgba(60,60,60,0.30) 0 1.0px,rgba(60,60,60,0.14) 1.0px 2.0px);"></div>
<div style="left:57px;top:334px;width:5px;height:1px;background:repeating-linear-gradient(90deg,rgba(60,60,60,0.30) 0 1.0px,rgba(60,60,60,0.14) 1.0px 2.0px);"></div>
<div style="left:63px;top:334px;width:2px;height:1px;background:repeating-linear-gradient(90deg,rgba(60,60,60,0.30) 0 1.0px,rgba(60,60,60,0.14) 1.0px 2.0px);"></div>
<div style="left:35px;top:336px;width:4px;height:1px;background:repeating-linear-gradient(90deg,rgba(60,60,60,0.30) 0 1.0px,rgba(60,60,60,0.14) 1.0px 2.0px);"></div>
<div style="left:41px;top:336px;width:8px;height:1px;background:repeating-linear-gradient(90deg,rgba(60,60,60,0.30) 0 1.0px,rgba(60,60,60,0.14) 1.0px 2.0px);"></div>
<div style="left:51px;top:336px;width:5px;height:1px;background:repeating-linear-gradient(90deg,rgba(60,60,60,0.30) 0 1.0px,rgba(60,60,60,0.14) 1.0px 2.0px);"></div>
<div style="left:57px;top:336px;width:5px;height:1px;background:repeating-linear-gradient(90deg,rgba(60,60,60,0.30) 0 1.0px,rgba(60,60,60,0.14) 1.0px 2.0px);"></div>
<div style="left:63px;top:336px;width:2px;height:1px;background:repeating-linear-gradient(90deg,rgba(60,60,60,0.30) 0 1.0px,rgba(60,60,60,0.14) 1.0px 2.0px);"></div>
<div style="left:35px;top:339px;width:10px;height:1px;background:repeating-linear-gradient(90deg,rgba(60,60,60,0.28) 0 1.0px,rgba(60,60,60,0.12) 1.0px 2.0px);"></div>
<div style="left:26px;top:343px;width:45px;height:1px;background:repeating-linear-gradient(90deg,rgba(60,60,60,0.33) 0 1.7px,rgba(60,60,60,0.15) 1.7px 2.7px);"></div>
<div style="left:28px;top:345px;width:44px;height:1px;background:repeating-linear-gradient(90deg,rgba(60,60,60,0.18) 0 1.0px,rgba(60,60,60,0.08) 1.0px 2.0px);"></div>
<div style="left:28px;top:346px;width:32px;height:1px;background:repeating-linear-gradient(90deg,rgba(60,60,60,0.28) 0 1.7px,rgba(60,60,60,0.12) 1.7px 2.7px);"></div>
<div style="left:41px;top:349px;width:19px;height:22.5px;background:#fff;border:1px solid #d9d9d9;box-sizing:border-box;"></div>
<div style="left:42px;top:350px;width:17px;height:2px;background:#e2e2e2;"></div>
<div style="left:43px;top:353px;width:3px;height:1px;background:repeating-linear-gradient(90deg,rgba(60,60,60,0.30) 0 1.0px,rgba(60,60,60,0.14) 1.0px 2.0px);"></div>
<div style="left:47px;top:353px;width:8px;height:1px;background:repeating-linear-gradient(90deg,rgba(60,60,60,0.30) 0 1.0px,rgba(60,60,60,0.14) 1.0px 2.0px);"></div>
<div style="left:43px;top:355px;width:3px;height:1px;background:repeating-linear-gradient(90deg,rgba(60,60,60,0.30) 0 1.0px,rgba(60,60,60,0.14) 1.0px 2.0px);"></div>
<div style="left:47px;top:355px;width:8px;height:1px;background:repeating-linear-gradient(90deg,rgba(60,60,60,0.30) 0 1.0px,rgba(60,60,60,0.14) 1.0px 2.0px);"></div>
<div style="left:43px;top:357px;width:3px;height:1px;background:repeating-linear-gradient(90deg,rgba(60,60,60,0.30) 0 1.0px,rgba(60,60,60,0.14) 1.0px 2.0px);"></div>
<div style="left:47px;top:357px;width:8px;height:1px;background:repeating-linear-gradient(90deg,rgba(60,60,60,0.30) 0 1.0px,rgba(60,60,60,0.14) 1.0px 2.0px);"></div>
<div style="left:43px;top:359px;width:3px;height:1px;background:repeating-linear-gradient(90deg,rgba(60,60,60,0.30) 0 1.0px,rgba(60,60,60,0.14) 1.0px 2.0px);"></div>
<div style="left:47px;top:359px;width:8px;height:1px;background:repeating-linear-gradient(90deg,rgba(60,60,60,0.30) 0 1.0px,rgba(60,60,60,0.14) 1.0px 2.0px);"></div>
<div style="left:43px;top:361px;width:3px;height:1px;background:repeating-linear-gradient(90deg,rgba(60,60,60,0.30) 0 1.0px,rgba(60,60,60,0.14) 1.0px 2.0px);"></div>
<div style="left:47px;top:361px;width:8px;height:1px;background:repeating-linear-gradient(90deg,rgba(60,60,60,0.30) 0 1.0px,rgba(60,60,60,0.14) 1.0px 2.0px);"></div>
<div style="left:43px;top:363px;width:3px;height:1px;background:repeating-linear-gradient(90deg,rgba(60,60,60,0.30) 0 1.0px,rgba(60,60,60,0.14) 1.0px 2.0px);"></div>
<div style="left:47px;top:363px;width:8px;height:1px;background:repeating-linear-gradient(90deg,rgba(60,60,60,0.30) 0 1.0px,rgba(60,60,60,0.14) 1.0px 2.0px);"></div>
<div style="left:44px;top:351px;width:9px;height:1px;background:repeating-linear-gradient(90deg,rgba(60,60,60,0.33) 0 1.0px,rgba(60,60,60,0.15) 1.0px 2.0px);"></div>
<div style="left:29px;top:377.6px;width:44px;height:1px;background:#cdcdcd;"></div>
<div style="left:29px;top:379px;width:28px;height:1px;background:repeating-linear-gradient(90deg,rgba(60,60,60,0.22) 0 1.7px,rgba(60,60,60,0.10) 1.7px 2.7px);"></div>
<div style="left:16.5px;top:373.5px;width:12.5px;height:14.5px;background:#fff;border:1px solid #9a9a9a;box-sizing:border-box;border-radius:1px;"></div>
<div style="left:19px;top:376.5px;width:7px;height:2px;background:#777;"></div>
<div style="left:19px;top:380px;width:7px;height:1px;background:#777;"></div>
<div style="left:19px;top:382px;width:7px;height:1px;background:#777;"></div>
<div style="left:19px;top:384px;width:4px;height:1px;background:#777;"></div>
<div style="left:15px;top:433px;width:66px;height:92px;background:#fff;border:1px solid #a6a6a6;box-sizing:border-box;"></div>
<div style="left:16px;top:434px;width:64px;height:4px;background:#e3e3e3;"></div>
<div style="left:16px;top:520px;width:64px;height:4px;background:#e3e3e3;"></div>
<div style="left:26px;top:447px;width:47px;height:1px;background:repeating-linear-gradient(90deg,rgba(60,60,60,0.10) 0 1.7px,rgba(60,60,60,0.04) 1.7px 2.7px);"></div>
<div style="left:26px;top:448px;width:47px;height:1px;background:repeating-linear-gradient(90deg,rgba(60,60,60,0.33) 0 1.7px,rgba(60,60,60,0.15) 1.7px 2.7px);"></div>
<div style="left:28px;top:450px;width:4px;height:1px;background:repeating-linear-gradient(90deg,rgba(60,60,60,0.22) 0 1.0px,rgba(60,60,60,0.10) 1.0px 2.0px);"></div>
<div style="left:41px;top:451px;width:19px;height:22.5px;background:#fff;border:1px solid #d9d9d9;box-sizing:border-box;"></div>
<div style="left:42px;top:452px;width:17px;height:2px;background:#e2e2e2;"></div>
<div style="left:43px;top:455px;width:3px;height:1px;background:repeating-linear-gradient(90deg,rgba(60,60,60,0.30) 0 1.0px,rgba(60,60,60,0.14) 1.0px 2.0px);"></div>
<div style="left:49px;top:455px;width:7px;height:1px;background:repeating-linear-gradient(90deg,rgba(60,60,60,0.30) 0 1.0px,rgba(60,60,60,0.14) 1.0px 2.0px);"></div>
<div style="left:43px;top:457px;width:3px;height:1px;background:repeating-linear-gradient(90deg,rgba(60,60,60,0.30) 0 1.0px,rgba(60,60,60,0.14) 1.0px 2.0px);"></div>
<div style="left:49px;top:457px;width:7px;height:1px;background:repeating-linear-gradient(90deg,rgba(60,60,60,0.30) 0 1.0px,rgba(60,60,60,0.14) 1.0px 2.0px);"></div>
<div style="left:43px;top:459px;width:3px;height:1px;background:repeating-linear-gradient(90deg,rgba(60,60,60,0.30) 0 1.0px,rgba(60,60,60,0.14) 1.0px 2.0px);"></div>
<div style="left:49px;top:459px;width:7px;height:1px;background:repeating-linear-gradient(90deg,rgba(60,60,60,0.30) 0 1.0px,rgba(60,60,60,0.14) 1.0px 2.0px);"></div>
<div style="left:43px;top:461px;width:3px;height:1px;background:repeating-linear-gradient(90deg,rgba(60,60,60,0.30) 0 1.0px,rgba(60,60,60,0.14) 1.0px 2.0px);"></div>
<div style="left:49px;top:461px;width:7px;height:1px;background:repeating-linear-gradient(90deg,rgba(60,60,60,0.30) 0 1.0px,rgba(60,60,60,0.14) 1.0px 2.0px);"></div>
<div style="left:43px;top:463px;width:3px;height:1px;background:repeating-linear-gradient(90deg,rgba(60,60,60,0.30) 0 1.0px,rgba(60,60,60,0.14) 1.0px 2.0px);"></div>
<div style="left:49px;top:463px;width:7px;height:1px;background:repeating-linear-gradient(90deg,rgba(60,60,60,0.30) 0 1.0px,rgba(60,60,60,0.14) 1.0px 2.0px);"></div>
<div style="left:43px;top:465px;width:3px;height:1px;background:repeating-linear-gradient(90deg,rgba(60,60,60,0.30) 0 1.0px,rgba(60,60,60,0.14) 1.0px 2.0px);"></div>
<div style="left:49px;top:465px;width:7px;height:1px;background:repeating-linear-gradient(90deg,rgba(60,60,60,0.30) 0 1.0px,rgba(60,60,60,0.14) 1.0px 2.0px);"></div>
<div style="left:43px;top:454px;width:14px;height:1px;background:repeating-linear-gradient(90deg,rgba(60,60,60,0.34) 0 1.0px,rgba(60,60,60,0.15) 1.0px 2.0px);"></div>
<div style="left:26px;top:475px;width:46px;height:1px;background:repeating-linear-gradient(90deg,rgba(60,60,60,0.32) 0 1.7px,rgba(60,60,60,0.14) 1.7px 2.7px);"></div>
<div style="left:27.5px;top:477px;width:45px;height:1px;background:repeating-linear-gradient(90deg,rgba(60,60,60,0.20) 0 2.4px,rgba(60,60,60,0.09) 2.4px 3.4px);"></div>
<div style="left:27.5px;top:479px;width:46px;height:1px;background:repeating-linear-gradient(90deg,rgba(60,60,60,0.20) 0 1.0px,rgba(60,60,60,0.09) 1.0px 2.0px);"></div>
<div style="left:27.5px;top:481px;width:42px;height:1px;background:repeating-linear-gradient(90deg,rgba(60,60,60,0.32) 0 1.7px,rgba(60,60,60,0.14) 1.7px 2.7px);"></div>
<div style="left:27.5px;top:483px;width:30px;height:1px;background:repeating-linear-gradient(90deg,rgba(60,60,60,0.20) 0 2.4px,rgba(60,60,60,0.09) 2.4px 3.4px);"></div>
<div style="left:27.5px;top:486px;width:45px;height:1px;background:repeating-linear-gradient(90deg,rgba(60,60,60,0.20) 0 1.0px,rgba(60,60,60,0.09) 1.0px 2.0px);"></div>
<div style="left:27.5px;top:487px;width:44px;height:1px;background:repeating-linear-gradient(90deg,rgba(60,60,60,0.32) 0 1.7px,rgba(60,60,60,0.14) 1.7px 2.7px);"></div>
<div style="left:27.5px;top:489px;width:46px;height:1px;background:repeating-linear-gradient(90deg,rgba(60,60,60,0.20) 0 2.4px,rgba(60,60,60,0.09) 2.4px 3.4px);"></div>
<div style="left:27.5px;top:490px;width:18px;height:1px;background:repeating-linear-gradient(90deg,rgba(60,60,60,0.20) 0 1.0px,rgba(60,60,60,0.09) 1.0px 2.0px);"></div>
<div style="left:27.5px;top:493px;width:45px;height:1px;background:repeating-linear-gradient(90deg,rgba(60,60,60,0.32) 0 1.7px,rgba(60,60,60,0.14) 1.7px 2.7px);"></div>
<div style="left:27.5px;top:494px;width:46px;height:1px;background:repeating-linear-gradient(90deg,rgba(60,60,60,0.20) 0 2.4px,rgba(60,60,60,0.09) 2.4px 3.4px);"></div>
<div style="left:27.5px;top:496px;width:2px;height:1px;background:repeating-linear-gradient(90deg,rgba(60,60,60,0.20) 0 1.0px,rgba(60,60,60,0.09) 1.0px 2.0px);"></div>
<div style="left:27.5px;top:501px;width:46px;height:1px;background:repeating-linear-gradient(90deg,rgba(60,60,60,0.32) 0 1.7px,rgba(60,60,60,0.14) 1.7px 2.7px);"></div>
<div style="left:27.5px;top:503px;width:8px;height:1px;background:repeating-linear-gradient(90deg,rgba(60,60,60,0.20) 0 2.4px,rgba(60,60,60,0.09) 2.4px 3.4px);"></div>
<div style="left:29px;top:512.6px;width:44px;height:1px;background:#cdcdcd;"></div>
<div style="left:29px;top:514px;width:28px;height:1px;background:repeating-linear-gradient(90deg,rgba(60,60,60,0.22) 0 1.7px,rgba(60,60,60,0.10) 1.7px 2.7px);"></div>
<div style="left:16.5px;top:508.5px;width:12.5px;height:14.5px;background:#fff;border:1px solid #9a9a9a;box-sizing:border-box;border-radius:1px;"></div>
<div style="left:19px;top:511.5px;width:7px;height:2px;background:#777;"></div>
<div style="left:19px;top:515px;width:7px;height:1px;background:#777;"></div>
<div style="left:19px;top:517px;width:7px;height:1px;background:#777;"></div>
<div style="left:19px;top:519px;width:4px;height:1px;background:#777;"></div>
<span id="t39" class="t" style="left:44.5px;top:261px;font-size:12px;line-height:15px;color:#000;">1</span>
<span id="t40" class="t" style="left:44.5px;top:396px;font-size:12px;line-height:15px;color:#000;">2</span>
<span id="t41" class="t" style="left:44.5px;top:531px;font-size:12px;line-height:15px;color:#000;">3</span>
<div style="left:153px;top:161px;width:26px;height:25px;background:#b0d2f2;border:1px solid #559add;box-sizing:border-box;"></div>
<svg style="left:157px;top:164px;" width="17" height="17" viewBox="0 0 17 17"><rect x="1.5" y="1.5" width="14" height="14" fill="#fff" stroke="#5f9277" stroke-width="1.3"/><path d="M3 4H14M3 6.5H6M11 6.5H14M3 9H5M12 9H14M3 11.5H4M13 11.5H14" stroke="#ccc" stroke-width="1"/><path d="M4.2 13.6L8.5 3.8L12.8 13.6M6 10.4H11" fill="none" stroke="#555" stroke-width="1.8"/><rect x="0.19999999999999996" y="0.19999999999999996" width="2.6" height="2.6" rx="0.8" fill="#fff" stroke="#5f9277" stroke-width="1"/><rect x="0.19999999999999996" y="14.2" width="2.6" height="2.6" rx="0.8" fill="#fff" stroke="#5f9277" stroke-width="1"/><rect x="14.2" y="0.19999999999999996" width="2.6" height="2.6" rx="0.8" fill="#fff" stroke="#5f9277" stroke-width="1"/><rect x="14.2" y="14.2" width="2.6" height="2.6" rx="0.8" fill="#fff" stroke="#5f9277" stroke-width="1"/></svg>
<svg style="left:157px;top:189px;" width="17" height="17" viewBox="0 0 17 17"><rect x="1.5" y="1.5" width="14" height="14" fill="#fff" stroke="#e8781c" stroke-width="1.3"/><rect x="3.5" y="3.5" width="10" height="4" fill="#2e6da4"/><path d="M3.5 10C5 6.5 7 6.5 8.5 9C10 6 12 5.5 13.5 7V12H3.5Z" fill="#6b9c88" stroke="#fff" stroke-width=".7"/><rect x="3.5" y="12" width="10" height="1.6" fill="#2e6da4"/><rect x="0.19999999999999996" y="0.19999999999999996" width="2.6" height="2.6" rx="0.8" fill="#fff" stroke="#e8781c" stroke-width="1"/><rect x="0.19999999999999996" y="14.2" width="2.6" height="2.6" rx="0.8" fill="#fff" stroke="#e8781c" stroke-width="1"/><rect x="14.2" y="0.19999999999999996" width="2.6" height="2.6" rx="0.8" fill="#fff" stroke="#e8781c" stroke-width="1"/><rect x="14.2" y="14.2" width="2.6" height="2.6" rx="0.8" fill="#fff" stroke="#e8781c" stroke-width="1"/></svg>
<svg style="left:157px;top:214px;" width="19" height="19" viewBox="0 0 19 19"><rect x="1.5" y="1.5" width="14" height="14" fill="#fff" stroke="#d0202a" stroke-width="1.3"/><rect x="3.5" y="3.5" width="10" height="4" fill="#2e6da4"/><path d="M3.5 10C5 6.5 7 6.5 8.5 9C10 6 12 5.5 13.5 7V12H3.5Z" fill="#6b9c88" stroke="#fff" stroke-width=".7"/><rect x="3.5" y="12" width="6" height="1.6" fill="#2e6da4"/><rect x="0.19999999999999996" y="0.19999999999999996" width="2.6" height="2.6" rx="0.8" fill="#fff" stroke="#d0202a" stroke-width="1"/><rect x="0.19999999999999996" y="14.2" width="2.6" height="2.6" rx="0.8" fill="#fff" stroke="#d0202a" stroke-width="1"/><rect x="14.2" y="0.19999999999999996" width="2.6" height="2.6" rx="0.8" fill="#fff" stroke="#d0202a" stroke-width="1"/><rect x="14.2" y="14.2" width="2.6" height="2.6" rx="0.8" fill="#fff" stroke="#d0202a" stroke-width="1"/><rect x="9.5" y="9.5" width="8.5" height="8.5" fill="#fff" stroke="#5f9277" stroke-width="1"/><path d="M11.4 16.6L13.8 11L16.2 16.6M12.4 14.8H15.2" fill="none" stroke="#555" stroke-width="1.3"/></svg>
<svg style="left:157px;top:239px;" width="17" height="17" viewBox="0 0 17 17"><rect x="1.5" y="1.5" width="14" height="14" fill="#fff" stroke="#3b5fa8" stroke-width="1.3"/><g fill="#6a6a6a"><rect x="3.6" y="3.6" width="4.3" height="4.3"/><rect x="9.1" y="3.6" width="4.3" height="4.3"/><rect x="3.6" y="9.1" width="4.3" height="4.3"/><rect x="9.1" y="9.1" width="4.3" height="4.3"/></g><rect x="0.19999999999999996" y="0.19999999999999996" width="2.6" height="2.6" rx="0.8" fill="#fff" stroke="#3b5fa8" stroke-width="1"/><rect x="0.19999999999999996" y="14.2" width="2.6" height="2.6" rx="0.8" fill="#fff" stroke="#3b5fa8" stroke-width="1"/><rect x="14.2" y="0.19999999999999996" width="2.6" height="2.6" rx="0.8" fill="#fff" stroke="#3b5fa8" stroke-width="1"/><rect x="14.2" y="14.2" width="2.6" height="2.6" rx="0.8" fill="#fff" stroke="#3b5fa8" stroke-width="1"/></svg>
<svg style="left:157px;top:264px;" width="17" height="17" viewBox="0 0 17 17"><rect x="3.5" y="3.5" width="10" height="10" fill="#dcdcdc"/><rect x="1.5" y="1.5" width="14" height="14" fill="none" stroke="#8a8a8a" stroke-width="1.2" stroke-dasharray="3 1.6"/><rect x="0.19999999999999996" y="0.19999999999999996" width="2.6" height="2.6" rx="0.8" fill="#fff" stroke="#8a8a8a" stroke-width="1"/><rect x="0.19999999999999996" y="14.2" width="2.6" height="2.6" rx="0.8" fill="#fff" stroke="#8a8a8a" stroke-width="1"/><rect x="14.2" y="0.19999999999999996" width="2.6" height="2.6" rx="0.8" fill="#fff" stroke="#8a8a8a" stroke-width="1"/><rect x="14.2" y="14.2" width="2.6" height="2.6" rx="0.8" fill="#fff" stroke="#8a8a8a" stroke-width="1"/></svg>
<div style="left:155px;top:288px;width:22px;height:1px;background:#8a8a8a;"></div>
<svg style="left:157px;top:295px;" width="17" height="17" viewBox="0 0 17 17"><rect x="2.5" y="2.5" width="13" height="13" fill="#fff" stroke="#777" stroke-width="1"/><rect x="1.4" y="1.4" width="2.2" height="2.2" rx="0.8" fill="#fff" stroke="#777" stroke-width="1"/><rect x="1.4" y="14.4" width="2.2" height="2.2" rx="0.8" fill="#fff" stroke="#777" stroke-width="1"/><rect x="14.4" y="1.4" width="2.2" height="2.2" rx="0.8" fill="#fff" stroke="#777" stroke-width="1"/><rect x="14.4" y="14.4" width="2.2" height="2.2" rx="0.8" fill="#fff" stroke="#777" stroke-width="1"/><rect x="0" y="0" width="7.5" height="7.5" fill="#ebebeb"/><path d="M0.6 0.6L6.8 6.8M6.8 0.6L0.6 6.8" stroke="#e8781c" stroke-width="2.1"/></svg>
<svg style="left:157px;top:320px;" width="18" height="18" viewBox="0 0 18 18"><rect x="5" y="3" width="7" height="7" fill="#ebebeb" stroke="#777" stroke-width="1" stroke-dasharray="2 1"/><rect x="3" y="7" width="7" height="7" fill="#ddd" stroke="#777" stroke-width="1"/><path d="M14 9V2M11.4 4.4L14 1.4L16.6 4.4" fill="none" stroke="#e8781c" stroke-width="2"/><path d="M3 8.5V16M0.6 13.4L3 16.4L5.4 13.4" fill="none" stroke="#2e6da4" stroke-width="2"/></svg>
<div style="left:155px;top:344px;width:22px;height:1px;background:#8a8a8a;"></div>
<svg style="left:159px;top:350px;" width="15" height="20" viewBox="0 0 15 20"><path d="M2 1.5V15.5L5.6 12.4L8.2 18.2L10.8 17L8.2 11.4L12.8 11.2Z" fill="#fff" stroke="#4a4a4a" stroke-width="1.1" stroke-linejoin="round"/></svg>
<svg style="left:155px;top:375px;" width="22" height="20" viewBox="0 0 22 20"><path d="M6.4 13.8L2.4 10C1.2 8.8 2.8 7.2 4.2 8.4L6.6 10.6V4.6C6.6 2.9 9 2.9 9 4.6V3.2C9 1.5 11.5 1.5 11.5 3.2V4.2C11.6 2.6 14 2.6 14 4.4V6.2C14.2 4.8 16.8 4.8 16.8 6.6L16.6 13C16.4 16.8 14.2 19 11 19C8.2 19 7 17.8 5.6 15.6Z" fill="#fff" stroke="#5a5a5a" stroke-width="1.1" stroke-linejoin="round"/><path d="M9 4.8V10M11.5 4.4V10M14 6V10.4M9.4 14V16.4M11.8 14V16.4" stroke="#8a8a8a" stroke-width=".8"/></svg>
<div style="left:931px;top:161px;width:26px;height:25px;background:#b0d2f2;border:1px solid #559add;box-sizing:border-box;"></div>
<div style="left:931px;top:186px;width:26px;height:25px;background:#b0d2f2;border:1px solid #559add;box-sizing:border-box;"></div>
<div style="left:931px;top:242px;width:26px;height:25px;background:#b0d2f2;border:1px solid #559add;box-sizing:border-box;"></div>
<svg style="left:935px;top:164px;" width="19" height="19" viewBox="0 0 19 19"><rect x="0.7" y="2.4" width="14.6" height="15" fill="#fff" stroke="#777" stroke-width="1.1"/><path d="M2.5 13H13.5M2.5 15H13.5" stroke="#bbb" stroke-width="1"/><rect x="4.4" y="-0.4" width="14.2" height="13" fill="#fff"/><rect x="5" y="0" width="13.2" height="3.4" fill="#2e6da4"/><path d="M5 9C7 3.8 9.4 3.8 11 7.4C12.6 3.6 15.6 3 18.2 4.2V10.4H5Z" fill="#6b9c88"/><path d="M5 7.4C7 3 9.4 3 11 6.6C12.6 2.8 15.6 2.2 18.2 3.4" fill="none" stroke="#fff" stroke-width="1.1"/><rect x="5" y="10.2" width="13.2" height="2" fill="#2e6da4"/></svg>
<svg style="left:935px;top:189px;" width="19" height="19" viewBox="0 0 19 19"><rect x="1" y="2" width="13.5" height="14" fill="#fff" stroke="#777" stroke-width="1"/><path d="M2.5 5.5H13M2.5 7.5H13M2.5 9.5H13M2.5 11.5H13M2.5 13.5H13" stroke="#bbb" stroke-width="1"/><rect x="5.5" y="0.2" width="12.5" height="2.8" fill="#e8781c"/><rect x="5.5" y="15.2" width="12.5" height="2.8" fill="#e8781c"/></svg>
<svg style="left:935px;top:214px;" width="19" height="19" viewBox="0 0 19 19"><rect x="1" y="1" width="14" height="14.5" fill="#fff" stroke="#777" stroke-width="1"/><path d="M2.5 3.5H13.5M2.5 5.5H6M2.5 7.5H6M2.5 9.5H6M2.5 11.5H6" stroke="#bbb" stroke-width="1"/><rect x="6" y="5.5" width="12.5" height="12.5" rx="1.5" fill="#2e6da4"/><path d="M15.5 8V12.6H9M11.4 10L8.6 12.6L11.4 15.2" fill="none" stroke="#fff" stroke-width="1.7"/></svg>
<div style="left:933px;top:238px;width:22px;height:1px;background:#8a8a8a;"></div>
<svg style="left:935px;top:245px;" width="18" height="19" viewBox="0 0 18 19"><rect x="1" y="1" width="16" height="12" fill="#2e6da4"/><path d="M1.2 16.6q1.3 -2 2.6 0t2.6 0t2.6 0t2.6 0t2.6 0t2.6 0" fill="none" stroke="#e8781c" stroke-width="1.1"/></svg>
<span id="t42" class="t" style="left:936.5px;top:243px;font-size:14px;line-height:16px;color:#fff;letter-spacing:0.547px;">æ</span>
<svg style="left:936px;top:270px;" width="17" height="18" viewBox="0 0 17 18"><path d="M5 1.8H13.6V12.2" fill="none" stroke="#e8701a" stroke-width="2.2"/><path d="M5.4 1V5.4M3 3.6L5.4 6L7.8 3.6" fill="none" stroke="#e8701a" stroke-width="1.6"/><circle cx="6.6" cy="9.8" r="3.9" fill="#ebebeb" stroke="#4c4c4c" stroke-width="2.1"/><path d="M9.6 12.8L13.4 16.4" stroke="#4c4c4c" stroke-width="2.6" stroke-linecap="round"/><path d="M1 16.2l.9 1l.9-1l.9 1l.9-1l.9 1l.9-1l.9 1l.9-1l.9 1" stroke="#e8701a" stroke-width=".9" fill="none"/></svg>
<svg style="left:936px;top:295px;" width="17" height="18" viewBox="0 0 17 18"><path d="M1.8 6.6V1.8H9.6" fill="none" stroke="#e8701a" stroke-width="2.2"/><path d="M9.4 1V5.6M7 3.8L9.4 6.2L11.8 3.8" fill="none" stroke="#e8701a" stroke-width="1.6"/><circle cx="10.2" cy="9.8" r="3.9" fill="#ebebeb" stroke="#4c4c4c" stroke-width="2.1"/><path d="M7.2 12.8L3.2 16.6" stroke="#4c4c4c" stroke-width="2.6" stroke-linecap="round"/><path d="M7.4 16.4l.9 1l.9-1l.9 1l.9-1l.9 1l.9-1l.9 1l.9-1l.9 1" stroke="#e8701a" stroke-width=".9" fill="none"/></svg>
<svg style="left:935px;top:319px;" width="19" height="20" viewBox="0 0 19 20"><rect x="1" y="1.5" width="16" height="2" fill="#c6c6c6"/><rect x="1" y="4.5" width="16" height="4.5" fill="#bdbdbd"/><rect x="1" y="10" width="8" height="1.5" fill="#c6c6c6"/><rect x="1" y="13" width="7" height="1.5" fill="#c6c6c6"/><rect x="1" y="16" width="6" height="1.5" fill="#c6c6c6"/><path d="M9.5 13.5L12 16.5L17 10" fill="none" stroke="#c6c6c6" stroke-width="2"/></svg>
<div style="left:933px;top:344px;width:22px;height:1px;background:#8a8a8a;"></div>
<svg style="left:938px;top:353px;" width="13" height="15" viewBox="0 0 13 15"><path d="M5.6 1.2H12.2" stroke="#2e6da4" stroke-width="2.2"/><path d="M6 0.2V14.6M10 0.2V14.6" stroke="#2e6da4" stroke-width="2.3"/><path d="M6 0.2C-0.6 0.2 -0.6 8.6 6 8.6Z" fill="#2e6da4"/></svg>
<span id="t43" class="t" style="left:937px;top:134px;font-size:13.5px;line-height:18px;color:#000;letter-spacing:-0.250px;">Текст</span>
<div style="left:980px;top:131px;width:133px;height:23px;background:#e8e8e8;border:1px solid #d4d4d4;box-sizing:border-box;"></div>
<svg style="left:1100px;top:139px;" width="9" height="8" viewBox="0 0 9 8"><path d="M1 1.5L4.5 5.5L8 1.5" fill="none" stroke="#bdbdbd" stroke-width="1.7"/></svg>
<svg style="left:1117px;top:132px;" width="21" height="20" viewBox="0 0 21 20"><g transform="translate(0.8 0)"><path d="M1.3 15.9L6.7 2.2H8.9L11.5 11.4" fill="none" stroke="#3c3c3c" stroke-width="2.1" stroke-linejoin="miter"/><path d="M3.8 11.9H11.6" stroke="#3c3c3c" stroke-width="2"/><path d="M0.4 15.9H3" stroke="#3c3c3c" stroke-width="1.4"/></g><path d="M18.7 1.6L19.6 2.8L15.9 13.2L12.4 11.3Z" fill="#2e6da4"/><path d="M12 12.5C14.1 12.3 15.5 13.8 15.1 15.5C14.6 17.5 12 18.1 8 17.7C9.9 16.9 10 15.7 10.2 14.6C10.4 13.4 11 12.7 12 12.5Z" fill="#2e6da4"/></svg>
<span id="t44" class="t" style="left:1140.5px;top:135px;font-size:12px;line-height:16px;color:#000;letter-spacing:-0.270px;">Стили</span>
<div style="left:1178px;top:130px;width:1px;height:24px;background:#b4b4b4;"></div>
<div style="left:1179px;top:130px;width:1px;height:24px;background:#f8f8f8;"></div>
<div style="left:1182px;top:131px;width:134px;height:23px;background:#e8e8e8;border:1px solid #d4d4d4;box-sizing:border-box;"></div>
<svg style="left:1303px;top:139px;" width="9" height="8" viewBox="0 0 9 8"><path d="M1 1.5L4.5 5.5L8 1.5" fill="none" stroke="#bdbdbd" stroke-width="1.7"/></svg>
<div style="left:1319px;top:131px;width:55px;height:23px;background:#fff;border:1px solid #d4d4d4;box-sizing:border-box;"></div>
<svg style="left:1361px;top:139px;" width="9" height="8" viewBox="0 0 9 8"><path d="M1 1.5L4.5 5.5L8 1.5" fill="none" stroke="#bdbdbd" stroke-width="1.7"/></svg>
<span id="t45" class="t" style="left:1379.6px;top:131.5px;font-size:18px;line-height:20px;color:#a9a9a9;font-weight:700;letter-spacing:-0.500px;">A</span>
<svg style="left:1390px;top:134px;" width="8" height="5" viewBox="0 0 8 5"><path d="M0.8 4.2L3.5 1L6.2 4.2Z" fill="#a9a9a9"/></svg>
<span id="t46" class="t" style="left:1407px;top:135.5px;font-size:13.8px;line-height:16px;color:#a9a9a9;font-weight:700;letter-spacing:-0.469px;">A</span>
<svg style="left:1415px;top:137px;" width="8" height="5" viewBox="0 0 8 5"><path d="M0.8 1L3.5 4.2L6.2 1Z" fill="#a9a9a9"/></svg>
<div style="left:1427px;top:130px;width:1px;height:24px;background:#b4b4b4;"></div>
<div style="left:1428px;top:130px;width:1px;height:24px;background:#f8f8f8;"></div>
<span id="t47" class="t" style="left:1436.2px;top:131.4px;font-size:19.5px;line-height:22px;color:#a9a9a9;font-family:'Liberation Serif',serif;font-weight:700;letter-spacing:-1.016px;">B</span>
<span id="t48" class="t" style="left:1464.5px;top:133px;font-size:18px;line-height:20px;color:#a9a9a9;font-family:'Liberation Serif',serif;font-style:italic;">I</span>
<span id="t49" class="t" style="left:1487px;top:133px;font-size:17px;line-height:20px;color:#a9a9a9;letter-spacing:1.219px;">U</span>
<div style="left:1487.5px;top:150px;width:13px;height:2px;background:#a9a9a9;"></div>
<span id="t50" class="t" style="left:1511.5px;top:134px;font-size:17px;line-height:20px;color:#a9a9a9;font-weight:700;letter-spacing:-0.344px;">X</span>
<span id="t51" class="t" style="left:1523.5px;top:132px;font-size:9px;line-height:10px;color:#a9a9a9;">2</span>
<span id="t52" class="t" style="left:1538px;top:134px;font-size:17px;line-height:20px;color:#a9a9a9;font-weight:700;letter-spacing:-0.344px;">X</span>
<span id="t53" class="t" style="left:1549px;top:142px;font-size:9px;line-height:10px;color:#a9a9a9;">2</span>
<div style="left:1559px;top:130px;width:1px;height:24px;background:#b4b4b4;"></div>
<div style="left:1560px;top:130px;width:1px;height:24px;background:#f8f8f8;"></div>
<svg style="left:1567px;top:136px;" width="15" height="14" viewBox="0 0 15 14"><rect x="0.5" y="0.6" width="14" height="1.3" fill="#a9a9a9"/><rect x="0.5" y="3.45" width="10" height="1.3" fill="#a9a9a9"/><rect x="0.5" y="6.3" width="14" height="1.3" fill="#a9a9a9"/><rect x="0.5" y="9.15" width="10" height="1.3" fill="#a9a9a9"/><rect x="0.5" y="12.0" width="14" height="1.3" fill="#a9a9a9"/></svg>
<svg style="left:1592.5px;top:136px;" width="15" height="14" viewBox="0 0 15 14"><rect x="0.5" y="0.6" width="14" height="1.3" fill="#a9a9a9"/><rect x="2.5" y="3.45" width="10" height="1.3" fill="#a9a9a9"/><rect x="0.5" y="6.3" width="14" height="1.3" fill="#a9a9a9"/><rect x="2.5" y="9.15" width="10" height="1.3" fill="#a9a9a9"/><rect x="0.5" y="12.0" width="14" height="1.3" fill="#a9a9a9"/></svg>
<svg style="left:1618.5px;top:136px;" width="15" height="14" viewBox="0 0 15 14"><rect x="0.5" y="0.6" width="14" height="1.3" fill="#a9a9a9"/><rect x="4.5" y="3.45" width="10" height="1.3" fill="#a9a9a9"/><rect x="0.5" y="6.3" width="14" height="1.3" fill="#a9a9a9"/><rect x="4.5" y="9.15" width="10" height="1.3" fill="#a9a9a9"/><rect x="0.5" y="12.0" width="14" height="1.3" fill="#a9a9a9"/></svg>
<svg style="left:1644.5px;top:136px;" width="15" height="14" viewBox="0 0 15 14"><rect x="0.5" y="0.6" width="14" height="1.3" fill="#a9a9a9"/><rect x="0.5" y="3.45" width="14" height="1.3" fill="#a9a9a9"/><rect x="0.5" y="6.3" width="14" height="1.3" fill="#a9a9a9"/><rect x="0.5" y="9.15" width="14" height="1.3" fill="#a9a9a9"/><rect x="0.5" y="12.0" width="14" height="1.3" fill="#a9a9a9"/></svg>
<svg style="left:1669px;top:134px;" width="18" height="17" viewBox="0 0 18 17"><path d="M1.5 3H15.5M3.5 1L1.5 3L3.5 5M13.5 1L15.5 3L13.5 5" fill="none" stroke="#a9a9a9" stroke-width="1.2"/><path d="M1 5V16M16 5V16" stroke="#a9a9a9" stroke-width="1.2"/><path d="M3 7.5H14M3 10.3H14M3 13.1H14M3 15.9H14" stroke="#a9a9a9" stroke-width="1.3"/></svg>
<svg style="left:1695px;top:134px;" width="18" height="17" viewBox="0 0 18 17"><path d="M1.5 3H15.5M3.5 1L1.5 3L3.5 5" fill="none" stroke="#a9a9a9" stroke-width="1.2"/><path d="M1 5V12M16 1V12" stroke="#a9a9a9" stroke-width="1.2"/><path d="M3 6.5H14M3 9.3H14M3 12.1H14" stroke="#a9a9a9" stroke-width="1.3"/><path d="M1.5 15H15.5M13.5 13L15.5 15L13.5 17" fill="none" stroke="#a9a9a9" stroke-width="1.2"/></svg>
<svg style="left:1722px;top:135px;" width="17" height="15" viewBox="0 0 17 15"><path d="M4 1H8M4 1C0.6 1 0.6 5.6 4 5.6ZM4.3 1V10M6.8 1V10" fill="#a9a9a9" stroke="#a9a9a9" stroke-width="1.2"/><path d="M9.5 1.5H16M9.5 4.3H16M9.5 7.1H16M9.5 9.9H16M1 12.8H16" stroke="#a9a9a9" stroke-width="1.3"/></svg>
<div style="left:1743px;top:130px;width:1px;height:24px;background:#b4b4b4;"></div>
<div style="left:1744px;top:130px;width:1px;height:24px;background:#f8f8f8;"></div>
<span id="t54" class="t" style="left:1751px;top:132.5px;font-size:18px;line-height:20px;color:#a9a9a9;font-weight:700;letter-spacing:-1.438px;">Ω</span>
<svg style="left:1775px;top:134px;" width="19" height="16" viewBox="0 0 19 16"><g fill="none" stroke="#a9a9a9" stroke-width="2.2"><rect x="1.5" y="6" width="10" height="6" rx="3" transform="rotate(-32 6.5 9)"/><rect x="7.5" y="4" width="10" height="6" rx="3" transform="rotate(-32 12.5 7)"/></g></svg>
<div style="left:293px;top:260px;width:400px;height:14px;background:#d9ead9;border:1px solid #1e8c1e;box-sizing:border-box;"></div>
<span id="t55" class="t" style="left:294.5px;top:259.5px;font-size:14px;line-height:16px;color:#111;font-family:'Liberation Serif',serif;font-weight:700;letter-spacing:0.344px;">How to Recover a Deleted File or Folder from a Network Drive</span>
<div style="left:267px;top:287px;width:446px;height:1px;background:#3a3a3a;"></div>
<div style="left:257px;top:304px;width:468px;height:213px;background:#d9ead9;border:1px solid #1e8c1e;box-sizing:border-box;"></div>
<span id="t56" class="t" style="left:258.5px;top:303.7px;font-size:10px;line-height:12px;color:#1a1a1a;letter-spacing:0.116px;">Below will be instructions on how to recover a deleted file from a network drive.  Network Drives will be</span>
<span id="t57" class="t" style="left:258.5px;top:319.4px;font-size:10px;line-height:12px;color:#1a1a1a;letter-spacing:0.023px;">drives other than C:, D:, or E:.  These drives usually start from H: (which is your personal network drive),</span>
<span id="t58" class="t" style="left:258.5px;top:334.7px;font-size:10px;line-height:12px;color:#1a1a1a;letter-spacing:-0.062px;">on up.</span>
<span id="t59" class="t" style="left:258.5px;top:360.4px;font-size:10px;line-height:12px;color:#1a1a1a;letter-spacing:0.020px;">Please Note:  Files stored on the local computer, (C:, My documents, Desktop, etc.) cannot be recovered</span>
<span id="t60" class="t" style="left:258.5px;top:375.7px;font-size:10px;line-height:12px;color:#1a1a1a;letter-spacing:0.049px;">if they are deleted and the recycle bin has been emptied.</span>
<span id="t61" class="t" style="left:258.5px;top:400.7px;font-size:10px;line-height:12px;color:#1a1a1a;letter-spacing:0.030px;">The following instructions will ONLY work on Windows XP, Windows Vista, Windows 7.  These</span>
<span id="t62" class="t" style="left:258.5px;top:416.1px;font-size:10px;line-height:12px;color:#1a1a1a;letter-spacing:0.008px;">instructions WILL NOT work on Mac OS X (Apple Computers) nor will they work off-campus.  Also, this</span>
<span id="t63" class="t" style="left:258.5px;top:432.0px;font-size:10px;line-height:12px;color:#1a1a1a;letter-spacing:0.041px;">process will ONLY recover the file(s) or folder that was there correctly 20 – 30 minutes ago.  If the file(s)</span>
<span id="t64" class="t" style="left:258.5px;top:447.4px;font-size:10px;line-height:12px;color:#1a1a1a;letter-spacing:0.040px;">or folder has been missing for longer than that time, please contact the IT Helpdesk at extension 7200.</span>
<span id="t65" class="t" style="left:276.3px;top:472.7px;font-size:10px;line-height:12px;color:#1a1a1a;letter-spacing:-0.406px;">1)</span>
<span id="t66" class="t" style="left:296.6px;top:472.7px;font-size:10px;line-height:12px;color:#1a1a1a;letter-spacing:0.103px;">Go to the location where the file(s) or folder was deleted via the Windows Explorer.  To start</span>
<span id="t67" class="t" style="left:294.4px;top:488.1px;font-size:10px;line-height:12px;color:#1a1a1a;letter-spacing:0.020px;">the Windows Explorer, double click on My Computer or click on START for Windows – Then click</span>
<span id="t68" class="t" style="left:294.4px;top:504.0px;font-size:10px;line-height:12px;color:#1a1a1a;letter-spacing:0.010px;">on Programs – Then Accessories – Then Windows Explorer.  You should get the below window:</span>
<div style="left:353px;top:533px;width:314px;height:209px;background:#fff;border-left:1px solid #444;border-top:1px solid #888;box-sizing:border-box;"></div>
<div style="left:354px;top:741px;width:313px;height:2px;background:#222;"></div>
<div style="left:665px;top:534px;width:2px;height:208px;background:#222;"></div>
<div style="left:663px;top:575px;width:1px;height:166px;background:#aaa;"></div>
<div style="left:355px;top:533px;width:312.5px;height:14px;background:#d9d9fb;border:1px solid #1616f0;box-sizing:border-box;"></div>
<div style="left:355px;top:546px;width:185.4px;height:11.4px;background:#d9d9fb;border:1px solid #1616f0;box-sizing:border-box;"></div>
<div style="left:355px;top:563.5px;width:185.4px;height:11.8px;background:#d9d9fb;border:1px solid #1616f0;box-sizing:border-box;"></div>
<div style="left:539.4px;top:546px;width:79.9px;height:11.4px;background:#d9d9fb;border:1px solid #1616f0;box-sizing:border-box;"></div>
<div style="left:539.4px;top:563.5px;width:79.9px;height:11.8px;background:#d9d9fb;border:1px solid #1616f0;box-sizing:border-box;"></div>
<div style="left:618.3px;top:546px;width:49.2px;height:11.4px;background:#d9d9fb;border:1px solid #1616f0;box-sizing:border-box;"></div>
<div style="left:618.3px;top:563.5px;width:49.2px;height:11.8px;background:#d9d9fb;border:1px solid #1616f0;box-sizing:border-box;"></div>
<div style="left:355px;top:556.4px;width:312.5px;height:8.1px;background:#d9d9fb;border:1px solid #1616f0;box-sizing:border-box;"></div>
<div style="left:361px;top:574.3px;width:52px;height:11.7px;background:#d9d9fb;border:1px solid #1616f0;box-sizing:border-box;"></div>
<div style="left:412px;top:574.3px;width:94px;height:11.7px;background:#d9d9fb;border:1px solid #1616f0;box-sizing:border-box;"></div>
<div style="left:505px;top:574.3px;width:43.4px;height:11.7px;background:#d9d9fb;border:1px solid #1616f0;box-sizing:border-box;"></div>
<div style="left:547.4px;top:574.3px;width:70.9px;height:11.7px;background:#d9d9fb;border:1px solid #1616f0;box-sizing:border-box;"></div>
<div style="left:361px;top:585px;width:52px;height:8.36px;background:#d9d9fb;border:1px solid #1616f0;box-sizing:border-box;"></div>
<div style="left:412px;top:585px;width:94px;height:8.36px;background:#d9d9fb;border:1px solid #1616f0;box-sizing:border-box;"></div>
<div style="left:505px;top:585px;width:43.4px;height:8.36px;background:#d9d9fb;border:1px solid #1616f0;box-sizing:border-box;"></div>
<div style="left:547.4px;top:585px;width:52.6px;height:8.36px;background:#d9d9fb;border:1px solid #1616f0;box-sizing:border-box;"></div>
<div style="left:599px;top:585px;width:19.3px;height:8.36px;background:#d9d9fb;border:1px solid #1616f0;box-sizing:border-box;"></div>
<div style="left:361px;top:592.36px;width:52px;height:8.36px;background:#d9d9fb;border:1px solid #1616f0;box-sizing:border-box;"></div>
<div style="left:412px;top:592.36px;width:94px;height:8.36px;background:#d9d9fb;border:1px solid #1616f0;box-sizing:border-box;"></div>
<div style="left:505px;top:592.36px;width:43.4px;height:8.36px;background:#d9d9fb;border:1px solid #1616f0;box-sizing:border-box;"></div>
<div style="left:547.4px;top:592.36px;width:52.6px;height:8.36px;background:#d9d9fb;border:1px solid #1616f0;box-sizing:border-box;"></div>
<div style="left:599px;top:592.36px;width:19.3px;height:8.36px;background:#d9d9fb;border:1px solid #1616f0;box-sizing:border-box;"></div>
<div style="left:361px;top:599.72px;width:52px;height:8.36px;background:#d9d9fb;border:1px solid #1616f0;box-sizing:border-box;"></div>
<div style="left:412px;top:599.72px;width:94px;height:8.36px;background:#d9d9fb;border:1px solid #1616f0;box-sizing:border-box;"></div>
<div style="left:505px;top:599.72px;width:43.4px;height:8.36px;background:#d9d9fb;border:1px solid #1616f0;box-sizing:border-box;"></div>
<div style="left:547.4px;top:599.72px;width:52.6px;height:8.36px;background:#d9d9fb;border:1px solid #1616f0;box-sizing:border-box;"></div>
<div style="left:599px;top:599.72px;width:19.3px;height:8.36px;background:#d9d9fb;border:1px solid #1616f0;box-sizing:border-box;"></div>
<div style="left:361px;top:607.08px;width:52px;height:8.36px;background:#d9d9fb;border:1px solid #1616f0;box-sizing:border-box;"></div>
<div style="left:412px;top:607.08px;width:94px;height:8.36px;background:#d9d9fb;border:1px solid #1616f0;box-sizing:border-box;"></div>
<div style="left:505px;top:607.08px;width:43.4px;height:8.36px;background:#d9d9fb;border:1px solid #1616f0;box-sizing:border-box;"></div>
<div style="left:547.4px;top:607.08px;width:52.6px;height:8.36px;background:#d9d9fb;border:1px solid #1616f0;box-sizing:border-box;"></div>
<div style="left:599px;top:607.08px;width:19.3px;height:8.36px;background:#d9d9fb;border:1px solid #1616f0;box-sizing:border-box;"></div>
<div style="left:361px;top:614.44px;width:52px;height:8.36px;background:#d9d9fb;border:1px solid #1616f0;box-sizing:border-box;"></div>
<div style="left:412px;top:614.44px;width:94px;height:8.36px;background:#d9d9fb;border:1px solid #1616f0;box-sizing:border-box;"></div>
<div style="left:505px;top:614.44px;width:43.4px;height:8.36px;background:#d9d9fb;border:1px solid #1616f0;box-sizing:border-box;"></div>
<div style="left:547.4px;top:614.44px;width:52.6px;height:8.36px;background:#d9d9fb;border:1px solid #1616f0;box-sizing:border-box;"></div>
<div style="left:599px;top:614.44px;width:19.3px;height:8.36px;background:#d9d9fb;border:1px solid #1616f0;box-sizing:border-box;"></div>
<div style="left:361px;top:621.8px;width:52px;height:8.36px;background:#d9d9fb;border:1px solid #1616f0;box-sizing:border-box;"></div>
<div style="left:412px;top:621.8px;width:94px;height:8.36px;background:#d9d9fb;border:1px solid #1616f0;box-sizing:border-box;"></div>
<div style="left:505px;top:621.8px;width:43.4px;height:8.36px;background:#d9d9fb;border:1px solid #1616f0;box-sizing:border-box;"></div>
<div style="left:547.4px;top:621.8px;width:52.6px;height:8.36px;background:#d9d9fb;border:1px solid #1616f0;box-sizing:border-box;"></div>
<div style="left:599px;top:621.8px;width:19.3px;height:8.36px;background:#d9d9fb;border:1px solid #1616f0;box-sizing:border-box;"></div>
<div style="left:361px;top:629.16px;width:52px;height:8.36px;background:#d9d9fb;border:1px solid #1616f0;box-sizing:border-box;"></div>
<div style="left:412px;top:629.16px;width:94px;height:8.36px;background:#d9d9fb;border:1px solid #1616f0;box-sizing:border-box;"></div>
<div style="left:505px;top:629.16px;width:43.4px;height:8.36px;background:#d9d9fb;border:1px solid #1616f0;box-sizing:border-box;"></div>
<div style="left:547.4px;top:629.16px;width:52.6px;height:8.36px;background:#d9d9fb;border:1px solid #1616f0;box-sizing:border-box;"></div>
<div style="left:599px;top:629.16px;width:19.3px;height:8.36px;background:#d9d9fb;border:1px solid #1616f0;box-sizing:border-box;"></div>
<div style="left:361px;top:636.52px;width:52px;height:8.36px;background:#d9d9fb;border:1px solid #1616f0;box-sizing:border-box;"></div>
<div style="left:412px;top:636.52px;width:94px;height:8.36px;background:#d9d9fb;border:1px solid #1616f0;box-sizing:border-box;"></div>
<div style="left:505px;top:636.52px;width:43.4px;height:8.36px;background:#d9d9fb;border:1px solid #1616f0;box-sizing:border-box;"></div>
<div style="left:547.4px;top:636.52px;width:52.6px;height:8.36px;background:#d9d9fb;border:1px solid #1616f0;box-sizing:border-box;"></div>
<div style="left:599px;top:636.52px;width:19.3px;height:8.36px;background:#d9d9fb;border:1px solid #1616f0;box-sizing:border-box;"></div>
<div style="left:361px;top:643.88px;width:52px;height:8.36px;background:#d9d9fb;border:1px solid #1616f0;box-sizing:border-box;"></div>
<div style="left:412px;top:643.88px;width:94px;height:8.36px;background:#d9d9fb;border:1px solid #1616f0;box-sizing:border-box;"></div>
<div style="left:505px;top:643.88px;width:43.4px;height:8.36px;background:#d9d9fb;border:1px solid #1616f0;box-sizing:border-box;"></div>
<div style="left:547.4px;top:643.88px;width:52.6px;height:8.36px;background:#d9d9fb;border:1px solid #1616f0;box-sizing:border-box;"></div>
<div style="left:599px;top:643.88px;width:19.3px;height:8.36px;background:#d9d9fb;border:1px solid #1616f0;box-sizing:border-box;"></div>
<div style="left:361px;top:651.24px;width:52px;height:8.36px;background:#d9d9fb;border:1px solid #1616f0;box-sizing:border-box;"></div>
<div style="left:412px;top:651.24px;width:94px;height:8.36px;background:#d9d9fb;border:1px solid #1616f0;box-sizing:border-box;"></div>
<div style="left:505px;top:651.24px;width:43.4px;height:8.36px;background:#d9d9fb;border:1px solid #1616f0;box-sizing:border-box;"></div>
<div style="left:547.4px;top:651.24px;width:52.6px;height:8.36px;background:#d9d9fb;border:1px solid #1616f0;box-sizing:border-box;"></div>
<div style="left:599px;top:651.24px;width:19.3px;height:8.36px;background:#d9d9fb;border:1px solid #1616f0;box-sizing:border-box;"></div>
<div style="left:361px;top:658.6px;width:52px;height:8.36px;background:#d9d9fb;border:1px solid #1616f0;box-sizing:border-box;"></div>
<div style="left:412px;top:658.6px;width:94px;height:8.36px;background:#d9d9fb;border:1px solid #1616f0;box-sizing:border-box;"></div>
<div style="left:505px;top:658.6px;width:43.4px;height:8.36px;background:#d9d9fb;border:1px solid #1616f0;box-sizing:border-box;"></div>
<div style="left:547.4px;top:658.6px;width:52.6px;height:8.36px;background:#d9d9fb;border:1px solid #1616f0;box-sizing:border-box;"></div>
<div style="left:599px;top:658.6px;width:19.3px;height:8.36px;background:#d9d9fb;border:1px solid #1616f0;box-sizing:border-box;"></div>
<div style="left:361px;top:665.96px;width:52px;height:8.36px;background:#d9d9fb;border:1px solid #1616f0;box-sizing:border-box;"></div>
<div style="left:412px;top:665.96px;width:94px;height:8.36px;background:#d9d9fb;border:1px solid #1616f0;box-sizing:border-box;"></div>
<div style="left:505px;top:665.96px;width:43.4px;height:8.36px;background:#d9d9fb;border:1px solid #1616f0;box-sizing:border-box;"></div>
<div style="left:547.4px;top:665.96px;width:52.6px;height:8.36px;background:#d9d9fb;border:1px solid #1616f0;box-sizing:border-box;"></div>
<div style="left:599px;top:665.96px;width:19.3px;height:8.36px;background:#d9d9fb;border:1px solid #1616f0;box-sizing:border-box;"></div>
<div style="left:361px;top:673.32px;width:52px;height:8.36px;background:#d9d9fb;border:1px solid #1616f0;box-sizing:border-box;"></div>
<div style="left:412px;top:673.32px;width:94px;height:8.36px;background:#d9d9fb;border:1px solid #1616f0;box-sizing:border-box;"></div>
<div style="left:505px;top:673.32px;width:43.4px;height:8.36px;background:#d9d9fb;border:1px solid #1616f0;box-sizing:border-box;"></div>
<div style="left:547.4px;top:673.32px;width:52.6px;height:8.36px;background:#d9d9fb;border:1px solid #1616f0;box-sizing:border-box;"></div>
<div style="left:599px;top:673.32px;width:19.3px;height:8.36px;background:#d9d9fb;border:1px solid #1616f0;box-sizing:border-box;"></div>
<div style="left:361px;top:680.68px;width:52px;height:8.36px;background:#d9d9fb;border:1px solid #1616f0;box-sizing:border-box;"></div>
<div style="left:412px;top:680.68px;width:94px;height:8.36px;background:#d9d9fb;border:1px solid #1616f0;box-sizing:border-box;"></div>
<div style="left:505px;top:680.68px;width:43.4px;height:8.36px;background:#d9d9fb;border:1px solid #1616f0;box-sizing:border-box;"></div>
<div style="left:547.4px;top:680.68px;width:52.6px;height:8.36px;background:#d9d9fb;border:1px solid #1616f0;box-sizing:border-box;"></div>
<div style="left:599px;top:680.68px;width:19.3px;height:8.36px;background:#d9d9fb;border:1px solid #1616f0;box-sizing:border-box;"></div>
<div style="left:361px;top:688.04px;width:52px;height:8.36px;background:#d9d9fb;border:1px solid #1616f0;box-sizing:border-box;"></div>
<div style="left:412px;top:688.04px;width:94px;height:8.36px;background:#d9d9fb;border:1px solid #1616f0;box-sizing:border-box;"></div>
<div style="left:505px;top:688.04px;width:43.4px;height:8.36px;background:#d9d9fb;border:1px solid #1616f0;box-sizing:border-box;"></div>
<div style="left:547.4px;top:688.04px;width:52.6px;height:8.36px;background:#d9d9fb;border:1px solid #1616f0;box-sizing:border-box;"></div>
<div style="left:599px;top:688.04px;width:19.3px;height:8.36px;background:#d9d9fb;border:1px solid #1616f0;box-sizing:border-box;"></div>
<div style="left:361px;top:695.4px;width:52px;height:12.6px;background:#d9d9fb;border:1px solid #1616f0;box-sizing:border-box;"></div>
<div style="left:412px;top:695.4px;width:94px;height:12.6px;background:#d9d9fb;border:1px solid #1616f0;box-sizing:border-box;"></div>
<div style="left:505px;top:695.4px;width:43.4px;height:12.6px;background:#d9d9fb;border:1px solid #1616f0;box-sizing:border-box;"></div>
<div style="left:547.4px;top:695.4px;width:52.6px;height:12.6px;background:#d9d9fb;border:1px solid #1616f0;box-sizing:border-box;"></div>
<div style="left:599px;top:695.4px;width:19.3px;height:12.6px;background:#d9d9fb;border:1px solid #1616f0;box-sizing:border-box;"></div>
<div style="left:361px;top:707px;width:52px;height:14.3px;background:#d9d9fb;border:1px solid #1616f0;box-sizing:border-box;"></div>
<div style="left:412px;top:707px;width:94px;height:14.3px;background:#d9d9fb;border:1px solid #1616f0;box-sizing:border-box;"></div>
<div style="left:505px;top:707px;width:43.4px;height:14.3px;background:#d9d9fb;border:1px solid #1616f0;box-sizing:border-box;"></div>
<div style="left:547.4px;top:707px;width:52.6px;height:14.3px;background:#d9d9fb;border:1px solid #1616f0;box-sizing:border-box;"></div>
<div style="left:599px;top:707px;width:19.3px;height:14.3px;background:#d9d9fb;border:1px solid #1616f0;box-sizing:border-box;"></div>
<div style="left:361px;top:720.3px;width:52px;height:11.1px;background:#d9d9fb;border:1px solid #1616f0;box-sizing:border-box;"></div>
<div style="left:412px;top:720.3px;width:94px;height:11.1px;background:#d9d9fb;border:1px solid #1616f0;box-sizing:border-box;"></div>
<div style="left:505px;top:720.3px;width:43.4px;height:11.1px;background:#d9d9fb;border:1px solid #1616f0;box-sizing:border-box;"></div>
<div style="left:547.4px;top:720.3px;width:52.6px;height:11.1px;background:#d9d9fb;border:1px solid #1616f0;box-sizing:border-box;"></div>
<div style="left:599px;top:720.3px;width:19.3px;height:11.1px;background:#d9d9fb;border:1px solid #1616f0;box-sizing:border-box;"></div>
<div style="left:361px;top:730.4px;width:52px;height:8.0px;background:#d9d9fb;border:1px solid #1616f0;box-sizing:border-box;"></div>
<div style="left:412px;top:730.4px;width:94px;height:8.0px;background:#d9d9fb;border:1px solid #1616f0;box-sizing:border-box;"></div>
<div style="left:505px;top:730.4px;width:43.4px;height:8.0px;background:#d9d9fb;border:1px solid #1616f0;box-sizing:border-box;"></div>
<div style="left:547.4px;top:730.4px;width:52.6px;height:8.0px;background:#d9d9fb;border:1px solid #1616f0;box-sizing:border-box;"></div>
<div style="left:599px;top:730.4px;width:19.3px;height:8.0px;background:#d9d9fb;border:1px solid #1616f0;box-sizing:border-box;"></div>
<span id="t69" class="t" style="left:383px;top:547.5px;font-size:4.3px;line-height:6px;color:#0c0c2a;font-weight:700;letter-spacing:0.087px;">► Computer ► dpeterdi (\\reservoir\employee$) (H:) ► ART-376</span>
<svg style="left:356px;top:547px;" width="30" height="9" viewBox="0 0 30 9"><circle cx="5" cy="4.5" r="3.6" fill="#111"/><path d="M6.6 4.5H3.4M4.8 3L3.2 4.5L4.8 6" stroke="#fff" stroke-width="1" fill="none"/><circle cx="13.5" cy="4.5" r="3.6" fill="#fff" stroke="#111" stroke-width=".8"/><path d="M19 3.5L20.5 5.5L22 3.5Z" fill="#111"/><path d="M26 2V7M24.5 7H27.5" stroke="#111" stroke-width=".9"/></svg>
<span id="t70" class="t" style="left:563px;top:547.5px;font-size:4.3px;line-height:6px;color:#0c0c2a;font-weight:700;letter-spacing:-0.012px;">▼  4►  Search ART-376</span>
<span id="t71" class="t" style="left:359px;top:557.5px;font-size:4.3px;line-height:6px;color:#0c0c2a;font-weight:700;letter-spacing:-0.022px;">File    Edit    View    Tools    Help</span>
<span id="t72" class="t" style="left:362px;top:566.2px;font-size:4.3px;line-height:6px;color:#0c0c2a;font-weight:700;letter-spacing:-0.316px;">Organize ▼</span>
<span id="t73" class="t" style="left:394px;top:566.2px;font-size:4.3px;line-height:6px;color:#0c0c2a;font-weight:700;letter-spacing:-0.219px;">New folder</span>
<svg style="left:620px;top:565px;" width="40" height="8" viewBox="0 0 40 8"><g fill="#222"><rect x="2" y="2" width="5" height="4"/><path d="M10 3L11.5 5L13 3Z"/><rect x="20" y="1.5" width="6.5" height="5"/><circle cx="36" cy="4" r="2.6"/></g></svg>
<svg style="left:628px;top:534px;" width="36" height="10" viewBox="0 0 36 10"><rect x="0.5" y="2.5" width="34" height="6" rx="1" fill="none" stroke="#445" stroke-width=".7"/><g fill="#223"><rect x="4" y="6" width="4" height="1.4"/><rect x="14" y="4" width="4" height="3.4"/><rect x="26" y="4" width="4" height="3.4"/></g></svg>
<span id="t74" class="t" style="left:418px;top:576.5px;font-size:4.3px;line-height:6px;color:#0c0c2a;font-weight:700;letter-spacing:-0.240px;">Name</span>
<span id="t75" class="t" style="left:509px;top:576.5px;font-size:4.3px;line-height:6px;color:#0c0c2a;font-weight:700;letter-spacing:-0.202px;">Date modified</span>
<span id="t76" class="t" style="left:551px;top:576.5px;font-size:4.3px;line-height:6px;color:#0c0c2a;font-weight:700;letter-spacing:-0.406px;">Type</span>
<span id="t77" class="t" style="left:593px;top:576.5px;font-size:4.3px;line-height:6px;color:#0c0c2a;font-weight:700;letter-spacing:-0.870px;">Size</span>
<span id="t78" class="t" style="left:363.5px;top:578.6px;font-size:4.3px;line-height:6px;color:#0c0c2a;font-weight:700;letter-spacing:0.009px;">● Favorites</span>
<span id="t79" class="t" style="left:363px;top:585.6px;font-size:4.3px;line-height:6px;color:#0c0c2a;font-weight:700;letter-spacing:0.086px;">  ■ Desktop</span>
<span id="t80" class="t" style="left:418px;top:586.2px;font-size:4.3px;line-height:6px;color:#0c0c2a;font-weight:700;letter-spacing:0.009px;">■ 100_4179</span>
<span id="t81" class="t" style="left:509px;top:586.2px;font-size:4.3px;line-height:6px;color:#0c0c2a;font-weight:700;letter-spacing:-0.160px;">5/26/2012 6:48 PM</span>
<span id="t82" class="t" style="left:551px;top:586.2px;font-size:4.3px;line-height:6px;color:#0c0c2a;font-weight:700;letter-spacing:-0.453px;">JPEG image</span>
<span id="t83" class="t" style="left:603px;top:586.2px;font-size:4.3px;line-height:6px;color:#0c0c2a;font-weight:700;letter-spacing:-0.516px;">140 KB</span>
<span id="t84" class="t" style="left:363px;top:592.9599999999999px;font-size:4.3px;line-height:6px;color:#0c0c2a;font-weight:700;letter-spacing:-0.230px;">  ▲ Downloads</span>
<span id="t85" class="t" style="left:418px;top:593.56px;font-size:4.3px;line-height:6px;color:#0c0c2a;font-weight:700;letter-spacing:0.009px;">■ 100_4180</span>
<span id="t86" class="t" style="left:509px;top:593.56px;font-size:4.3px;line-height:6px;color:#0c0c2a;font-weight:700;letter-spacing:-0.160px;">5/26/2012 6:50 PM</span>
<span id="t87" class="t" style="left:551px;top:593.56px;font-size:4.3px;line-height:6px;color:#0c0c2a;font-weight:700;letter-spacing:-0.453px;">JPEG image</span>
<span id="t88" class="t" style="left:601px;top:593.56px;font-size:4.3px;line-height:6px;color:#0c0c2a;font-weight:700;letter-spacing:-0.594px;">1,032 KB</span>
<span id="t89" class="t" style="left:363px;top:600.3199999999999px;font-size:4.3px;line-height:6px;color:#0c0c2a;font-weight:700;letter-spacing:-0.146px;">  ■ Recent Places</span>
<span id="t90" class="t" style="left:418px;top:600.92px;font-size:4.3px;line-height:6px;color:#0c0c2a;font-weight:700;letter-spacing:0.009px;">■ 100_4181</span>
<span id="t91" class="t" style="left:509px;top:600.92px;font-size:4.3px;line-height:6px;color:#0c0c2a;font-weight:700;letter-spacing:-0.160px;">5/26/2012 6:50 PM</span>
<span id="t92" class="t" style="left:551px;top:600.92px;font-size:4.3px;line-height:6px;color:#0c0c2a;font-weight:700;letter-spacing:-0.453px;">JPEG image</span>
<span id="t93" class="t" style="left:601px;top:600.92px;font-size:4.3px;line-height:6px;color:#0c0c2a;font-weight:700;letter-spacing:-0.594px;">1,008 KB</span>
<span id="t94" class="t" style="left:418px;top:608.28px;font-size:4.3px;line-height:6px;color:#0c0c2a;font-weight:700;letter-spacing:0.009px;">■ 100_4182</span>
<span id="t95" class="t" style="left:509px;top:608.28px;font-size:4.3px;line-height:6px;color:#0c0c2a;font-weight:700;letter-spacing:-0.160px;">5/26/2012 6:50 PM</span>
<span id="t96" class="t" style="left:551px;top:608.28px;font-size:4.3px;line-height:6px;color:#0c0c2a;font-weight:700;letter-spacing:-0.453px;">JPEG image</span>
<span id="t97" class="t" style="left:601px;top:608.28px;font-size:4.3px;line-height:6px;color:#0c0c2a;font-weight:700;letter-spacing:-0.594px;">1,060 KB</span>
<span id="t98" class="t" style="left:363px;top:615.04px;font-size:4.3px;line-height:6px;color:#0c0c2a;font-weight:700;letter-spacing:0.105px;">● Libraries</span>
<span id="t99" class="t" style="left:418px;top:615.64px;font-size:4.3px;line-height:6px;color:#0c0c2a;font-weight:700;letter-spacing:0.009px;">■ 100_4183</span>
<span id="t100" class="t" style="left:509px;top:615.64px;font-size:4.3px;line-height:6px;color:#0c0c2a;font-weight:700;letter-spacing:-0.160px;">5/26/2012 6:50 PM</span>
<span id="t101" class="t" style="left:551px;top:615.64px;font-size:4.3px;line-height:6px;color:#0c0c2a;font-weight:700;letter-spacing:-0.453px;">JPEG image</span>
<span id="t102" class="t" style="left:603px;top:615.64px;font-size:4.3px;line-height:6px;color:#0c0c2a;font-weight:700;letter-spacing:-0.516px;">921 KB</span>
<span id="t103" class="t" style="left:363px;top:622.4px;font-size:4.3px;line-height:6px;color:#0c0c2a;font-weight:700;letter-spacing:-0.215px;">  ■ Documents</span>
<span id="t104" class="t" style="left:418px;top:623.0px;font-size:4.3px;line-height:6px;color:#0c0c2a;font-weight:700;letter-spacing:0.009px;">■ 100_4184</span>
<span id="t105" class="t" style="left:509px;top:623.0px;font-size:4.3px;line-height:6px;color:#0c0c2a;font-weight:700;letter-spacing:-0.160px;">5/26/2012 6:51 PM</span>
<span id="t106" class="t" style="left:551px;top:623.0px;font-size:4.3px;line-height:6px;color:#0c0c2a;font-weight:700;letter-spacing:-0.453px;">JPEG image</span>
<span id="t107" class="t" style="left:603px;top:623.0px;font-size:4.3px;line-height:6px;color:#0c0c2a;font-weight:700;letter-spacing:-0.516px;">988 KB</span>
<span id="t108" class="t" style="left:363px;top:629.76px;font-size:4.3px;line-height:6px;color:#0c0c2a;font-weight:700;letter-spacing:0.260px;">  ♪ Music</span>
<span id="t109" class="t" style="left:418px;top:630.36px;font-size:4.3px;line-height:6px;color:#0c0c2a;font-weight:700;letter-spacing:0.009px;">■ 100_4185</span>
<span id="t110" class="t" style="left:509px;top:630.36px;font-size:4.3px;line-height:6px;color:#0c0c2a;font-weight:700;letter-spacing:-0.160px;">5/26/2012 6:51 PM</span>
<span id="t111" class="t" style="left:551px;top:630.36px;font-size:4.3px;line-height:6px;color:#0c0c2a;font-weight:700;letter-spacing:-0.453px;">JPEG image</span>
<span id="t112" class="t" style="left:601px;top:630.36px;font-size:4.3px;line-height:6px;color:#0c0c2a;font-weight:700;letter-spacing:-0.594px;">1,090 KB</span>
<span id="t113" class="t" style="left:363px;top:637.12px;font-size:4.3px;line-height:6px;color:#0c0c2a;font-weight:700;letter-spacing:0.169px;">  ■ Pictures</span>
<span id="t114" class="t" style="left:418px;top:637.72px;font-size:4.3px;line-height:6px;color:#0c0c2a;font-weight:700;letter-spacing:-0.201px;">■ ART376_Quiz_Peters_2012</span>
<span id="t115" class="t" style="left:509px;top:637.72px;font-size:4.3px;line-height:6px;color:#0c0c2a;font-weight:700;letter-spacing:-0.160px;">5/26/2012 7:09 PM</span>
<span id="t116" class="t" style="left:551px;top:637.72px;font-size:4.3px;line-height:6px;color:#0c0c2a;font-weight:700;letter-spacing:-0.184px;">Microsoft Word D...</span>
<span id="t117" class="t" style="left:603px;top:637.72px;font-size:4.3px;line-height:6px;color:#0c0c2a;font-weight:700;letter-spacing:-0.516px;">252 KB</span>
<span id="t118" class="t" style="left:363px;top:644.48px;font-size:4.3px;line-height:6px;color:#0c0c2a;font-weight:700;letter-spacing:0.200px;">  ■ Videos</span>
<span id="t119" class="t" style="left:418px;top:645.08px;font-size:4.3px;line-height:6px;color:#0c0c2a;font-weight:700;letter-spacing:-0.118px;">■ Assignment A1 - Understanding Narrative</span>
<span id="t120" class="t" style="left:509px;top:645.08px;font-size:4.3px;line-height:6px;color:#0c0c2a;font-weight:700;letter-spacing:-0.160px;">5/2/2012 10:41 PM</span>
<span id="t121" class="t" style="left:551px;top:645.08px;font-size:4.3px;line-height:6px;color:#0c0c2a;font-weight:700;letter-spacing:-0.184px;">Microsoft Word D...</span>
<span id="t122" class="t" style="left:603px;top:645.08px;font-size:4.3px;line-height:6px;color:#0c0c2a;font-weight:700;letter-spacing:-0.516px;">529 KB</span>
<span id="t123" class="t" style="left:418px;top:652.44px;font-size:4.3px;line-height:6px;color:#0c0c2a;font-weight:700;letter-spacing:-0.125px;">■ Assignment A2 - Architectural Narratives</span>
<span id="t124" class="t" style="left:509px;top:652.44px;font-size:4.3px;line-height:6px;color:#0c0c2a;font-weight:700;letter-spacing:-0.128px;">5/9/2012 9:11 PM</span>
<span id="t125" class="t" style="left:551px;top:652.44px;font-size:4.3px;line-height:6px;color:#0c0c2a;font-weight:700;letter-spacing:-0.184px;">Microsoft Word D...</span>
<span id="t126" class="t" style="left:603px;top:652.44px;font-size:4.3px;line-height:6px;color:#0c0c2a;font-weight:700;letter-spacing:-0.047px;">14 KB</span>
<span id="t127" class="t" style="left:363px;top:659.1999999999999px;font-size:4.3px;line-height:6px;color:#0c0c2a;font-weight:700;letter-spacing:0.028px;">▼ Computer</span>
<span id="t128" class="t" style="left:418px;top:659.8px;font-size:4.3px;line-height:6px;color:#0c0c2a;font-weight:700;letter-spacing:-0.139px;">■ Assignment A3 - Visual Elements</span>
<span id="t129" class="t" style="left:509px;top:659.8px;font-size:4.3px;line-height:6px;color:#0c0c2a;font-weight:700;letter-spacing:-0.174px;">5/17/2012 10:35 PM</span>
<span id="t130" class="t" style="left:551px;top:659.8px;font-size:4.3px;line-height:6px;color:#0c0c2a;font-weight:700;letter-spacing:-0.184px;">Microsoft Word D...</span>
<span id="t131" class="t" style="left:603px;top:659.8px;font-size:4.3px;line-height:6px;color:#0c0c2a;font-weight:700;letter-spacing:-0.047px;">13 KB</span>
<span id="t132" class="t" style="left:363px;top:666.56px;font-size:4.3px;line-height:6px;color:#0c0c2a;font-weight:700;letter-spacing:-0.276px;">  ▬ Local Disk (C:)</span>
<span id="t133" class="t" style="left:418px;top:667.16px;font-size:4.3px;line-height:6px;color:#0c0c2a;font-weight:700;letter-spacing:-0.099px;">■ Assignment A4 - Style + Narrative</span>
<span id="t134" class="t" style="left:509px;top:667.16px;font-size:4.3px;line-height:6px;color:#0c0c2a;font-weight:700;letter-spacing:-0.160px;">5/25/2012 7:05 PM</span>
<span id="t135" class="t" style="left:551px;top:667.16px;font-size:4.3px;line-height:6px;color:#0c0c2a;font-weight:700;letter-spacing:-0.184px;">Microsoft Word D...</span>
<span id="t136" class="t" style="left:603px;top:667.16px;font-size:4.3px;line-height:6px;color:#0c0c2a;font-weight:700;letter-spacing:-0.047px;">13 KB</span>
<span id="t137" class="t" style="left:363px;top:673.92px;font-size:4.3px;line-height:6px;color:#0c0c2a;font-weight:700;letter-spacing:-0.151px;">  ▼ infotech$ (\\reservo</span>
<span id="t138" class="t" style="left:418px;top:674.52px;font-size:4.3px;line-height:6px;color:#0c0c2a;font-weight:700;letter-spacing:-0.098px;">■ Dax Peters - Research Project</span>
<span id="t139" class="t" style="left:509px;top:674.52px;font-size:4.3px;line-height:6px;color:#0c0c2a;font-weight:700;letter-spacing:-0.160px;">5/22/2012 4:28 PM</span>
<span id="t140" class="t" style="left:551px;top:674.52px;font-size:4.3px;line-height:6px;color:#0c0c2a;font-weight:700;letter-spacing:-0.184px;">Microsoft Word D...</span>
<span id="t141" class="t" style="left:603px;top:674.52px;font-size:4.3px;line-height:6px;color:#0c0c2a;font-weight:700;letter-spacing:-0.516px;">209 KB</span>
<span id="t142" class="t" style="left:363px;top:681.28px;font-size:4.3px;line-height:6px;color:#0c0c2a;font-weight:700;letter-spacing:-0.092px;">  ▼ dpeterdi (\\reservoir</span>
<span id="t143" class="t" style="left:418px;top:681.88px;font-size:4.3px;line-height:6px;color:#0c0c2a;font-weight:700;letter-spacing:0.016px;">■ IMG_5380</span>
<span id="t144" class="t" style="left:509px;top:681.88px;font-size:4.3px;line-height:6px;color:#0c0c2a;font-weight:700;letter-spacing:-0.145px;">5/9/2012 8:40 PM</span>
<span id="t145" class="t" style="left:551px;top:681.88px;font-size:4.3px;line-height:6px;color:#0c0c2a;font-weight:700;letter-spacing:-0.453px;">JPEG image</span>
<span id="t146" class="t" style="left:603px;top:681.88px;font-size:4.3px;line-height:6px;color:#0c0c2a;font-weight:700;letter-spacing:-0.516px;">165 KB</span>
<span id="t147" class="t" style="left:363px;top:688.64px;font-size:4.3px;line-height:6px;color:#0c0c2a;font-weight:700;letter-spacing:-0.104px;">  ▼ datatel$ (\\reservoir</span>
<span id="t148" class="t" style="left:418px;top:689.24px;font-size:4.3px;line-height:6px;color:#0c0c2a;font-weight:700;letter-spacing:-0.084px;">■ Mid Term - Documenting Artwork and L...</span>
<span id="t149" class="t" style="left:509px;top:689.24px;font-size:4.3px;line-height:6px;color:#0c0c2a;font-weight:700;letter-spacing:-0.160px;">5/26/2012 7:03 PM</span>
<span id="t150" class="t" style="left:551px;top:689.24px;font-size:4.3px;line-height:6px;color:#0c0c2a;font-weight:700;letter-spacing:-0.184px;">Microsoft Word D...</span>
<span id="t151" class="t" style="left:603px;top:689.24px;font-size:4.3px;line-height:6px;color:#0c0c2a;font-weight:700;letter-spacing:-0.516px;">231 KB</span>
<span id="t152" class="t" style="left:363px;top:696.5px;font-size:4.3px;line-height:6px;color:#0c0c2a;font-weight:700;letter-spacing:-0.183px;">  ▼ scripts (\\ju.edu\SYS</span>
<span id="t153" class="t" style="left:532px;top:701px;font-size:4.3px;line-height:6px;color:#0c0c2a;font-weight:700;letter-spacing:-0.155px;">Capture Image</span>
<span id="t154" class="t" style="left:572.5px;top:701px;font-size:4.3px;line-height:6px;color:#0c0c2a;font-weight:700;letter-spacing:-0.303px;">Print Screen</span>
<span id="t155" class="t" style="left:363px;top:710.5px;font-size:4.3px;line-height:6px;color:#0c0c2a;font-weight:700;letter-spacing:0.281px;">● Network</span>
<span id="t156" class="t" style="left:364px;top:724.5px;font-size:4.3px;line-height:6px;color:#0c0c2a;font-weight:700;letter-spacing:0.106px;">▲        15  items</span>
<span id="t157" class="t" style="left:414px;top:724.5px;font-size:4.3px;line-height:6px;color:#0c0c2a;font-weight:700;letter-spacing:-0.303px;">Offline status:  Online</span>
<span id="t158" class="t" style="left:365px;top:731.3px;font-size:4.3px;line-height:6px;color:#0c0c2a;font-weight:700;letter-spacing:1.344px;">■ ▪</span>
<span id="t159" class="t" style="left:403px;top:731.3px;font-size:4.3px;line-height:6px;color:#0c0c2a;font-weight:700;letter-spacing:-0.203px;">Offline availability:  Not available</span>
<div style="left:400px;top:741px;width:8px;height:2px;background:#000;"></div>
<div style="left:252px;top:879px;width:480px;height:3px;background:#151515;"></div>
<div style="left:288px;top:888px;width:11px;height:13px;background:#d9ead9;border:1px solid #1e8c1e;box-sizing:border-box;"></div>
<span id="t160" class="t" style="left:290.2px;top:888.3px;font-size:11.5px;line-height:12px;color:#111;font-weight:700;">1</span>
<div style="left:301.5px;top:882px;width:2px;height:22px;background:#0a0a0a;"></div>
<div style="left:307px;top:884px;width:280px;height:11px;background:#d9ead9;border:1px solid #1e8c1e;box-sizing:border-box;"></div>
<span id="t161" class="t" style="left:309px;top:883.5px;font-size:10px;line-height:12px;color:#1a1a1a;letter-spacing:0.015px;">How to Recover a Deleted File or Folder from a Network Drive</span>
<span id="t162" class="t" style="left:1129px;top:289.5px;font-size:18px;line-height:22px;color:#365f91;font-family:'Liberation Serif',serif;font-weight:700;letter-spacing:0.254px;">How to Recover a Deleted File or Folder from a Network Drive</span>
<div style="left:1181px;top:372px;width:8px;height:18px;background:#80fbfb;"></div>
<div style="left:1202px;top:372px;width:7px;height:18px;background:#80fbfb;"></div>
<div style="left:1237px;top:372px;width:8px;height:18px;background:#80fbfb;"></div>
<div style="left:1368px;top:421px;width:8px;height:18px;background:#80fbfb;"></div>
<span id="t163" class="t" style="left:1066.5px;top:352.5px;font-size:13.5px;line-height:16px;color:#151515;letter-spacing:0.124px;">Below will be instructions on how to recover a deleted file from a network drive. Network Drives will be</span>
<span id="t164" class="t" style="left:1066.5px;top:373.5px;font-size:13.5px;line-height:16px;color:#151515;letter-spacing:0.031px;">drives other than C:, D:, or E:. These drives usually start from H: (which is your personal network drive),</span>
<span id="t165" class="t" style="left:1066.5px;top:394.5px;font-size:13.5px;line-height:16px;color:#151515;letter-spacing:-0.109px;">on up.</span>
<span id="t166" class="t" style="left:1066.5px;top:422.5px;font-size:13.5px;line-height:16px;color:#151515;letter-spacing:-0.008px;">Please Note: Files stored on the local computer, (C:, My documents, Desktop, etc.) cannot be recovered</span>
<span id="t167" class="t" style="left:1066.5px;top:443.5px;font-size:13.5px;line-height:16px;color:#151515;letter-spacing:-0.013px;">if they are deleted and the recycle bin has been emptied.</span>
<span id="t168" class="t" style="left:1066.5px;top:471.5px;font-size:13.5px;line-height:16px;color:#151515;letter-spacing:-0.086px;">The following instructions will ONLY work on Windows XP, Windows Vista, Windows 7. These</span>
<span id="t169" class="t" style="left:1066.5px;top:492.3px;font-size:13.5px;line-height:16px;color:#151515;letter-spacing:-0.072px;">instructions WILL NOT work on Mac OS X (Apple Computers) nor will they work off-campus. Also, this</span>
<span id="t170" class="t" style="left:1066.5px;top:512.5px;font-size:13.5px;line-height:16px;color:#151515;letter-spacing:-0.042px;">process will ONLY recover the file(s) or folder that was there correctly 20 - 30 minutes ago. If the file(s)</span>
<span id="t171" class="t" style="left:1066.5px;top:532.7px;font-size:13.5px;line-height:16px;color:#151515;letter-spacing:-0.038px;">or folder has been missing for longer than that time, please contact the IT Helpdesk at extension 7200.</span>
<span id="t172" class="t" style="left:1093px;top:561.5px;font-size:13.5px;line-height:16px;color:#151515;letter-spacing:-1.016px;">1)</span>
<span id="t173" class="t" style="left:1120.8px;top:561.5px;font-size:13.5px;line-height:16px;color:#151515;letter-spacing:0.059px;">Go to the location where the file(s) or folder was deleted via the Windows Explorer. To start</span>
<span id="t174" class="t" style="left:1117.2px;top:581.7px;font-size:13.5px;line-height:16px;color:#151515;letter-spacing:-0.089px;">the Windows Explorer, double click on My Computer or click on START for Windows - Then click</span>
<span id="t175" class="t" style="left:1117.2px;top:602.1px;font-size:13.5px;line-height:16px;color:#151515;letter-spacing:-0.098px;">on Programs - Then Accessories - Then Windows Explorer. You should get the below window:</span>
<svg style="left:1230px;top:387.2px;" width="9" height="4" viewBox="0 0 9 4"><path d="M0 2.8L1.5 0.8L3.0 2.8L4.5 0.8L6.0 2.8L7.5 0.8" fill="none" stroke="#e03030" stroke-width=".9"/></svg>
<svg style="left:1436px;top:387.2px;" width="10" height="4" viewBox="0 0 10 4"><path d="M0 2.8L1.5 0.8L3.0 2.8L4.5 0.8L6.0 2.8L7.5 0.8L9.0 2.8" fill="none" stroke="#e03030" stroke-width=".9"/></svg>
<svg style="left:1393px;top:485.2px;" width="14" height="4" viewBox="0 0 14 4"><path d="M0 2.8L1.5 0.8L3.0 2.8L4.5 0.8L6.0 2.8L7.5 0.8L9.0 2.8L10.5 0.8L12.0 2.8" fill="none" stroke="#e03030" stroke-width=".9"/></svg>
<div style="left:1197px;top:646px;width:422px;height:1px;background:#111;"></div>
<div style="left:1197px;top:662px;width:422px;height:1px;background:#111;"></div>
<div style="left:1197px;top:676px;width:422px;height:1px;background:#111;"></div>
<div style="left:1197px;top:686px;width:422px;height:1px;background:#111;"></div>
<div style="left:1197px;top:704px;width:422px;height:1px;background:#111;"></div>
<div style="left:1197px;top:646px;width:1px;height:59px;background:#111;"></div>
<div style="left:1618px;top:646px;width:1px;height:59px;background:#111;"></div>
<div style="left:1443px;top:662px;width:1px;height:14px;background:#111;"></div>
<div style="left:1443px;top:686px;width:1px;height:19px;background:#111;"></div>
<div style="left:1551.5px;top:662px;width:1px;height:14px;background:#111;"></div>
<div style="left:1551.5px;top:686px;width:1px;height:19px;background:#111;"></div>
<div style="left:1205px;top:715px;width:346.5px;height:1px;background:#a8a8a8;"></div>
<div style="left:1205px;top:726.8px;width:346.5px;height:1px;background:#a8a8a8;"></div>
<div style="left:1205px;top:736.3px;width:346.5px;height:1px;background:#a8a8a8;"></div>
<div style="left:1205px;top:745.8px;width:346.5px;height:1px;background:#a8a8a8;"></div>
<div style="left:1205px;top:763.2px;width:346.5px;height:1px;background:#a8a8a8;"></div>
<div style="left:1205px;top:773.4px;width:346.5px;height:1px;background:#a8a8a8;"></div>
<div style="left:1205px;top:783px;width:346.5px;height:1px;background:#a8a8a8;"></div>
<div style="left:1205px;top:792.4px;width:346.5px;height:1px;background:#a8a8a8;"></div>
<div style="left:1205px;top:803px;width:346.5px;height:1px;background:#a8a8a8;"></div>
<div style="left:1205px;top:812.4px;width:346.5px;height:1px;background:#a8a8a8;"></div>
<div style="left:1205px;top:830.5px;width:346.5px;height:1px;background:#a8a8a8;"></div>
<div style="left:1205px;top:841px;width:346.5px;height:1px;background:#a8a8a8;"></div>
<div style="left:1205px;top:850.5px;width:346.5px;height:1px;background:#a8a8a8;"></div>
<div style="left:1205px;top:860px;width:346.5px;height:1px;background:#a8a8a8;"></div>
<div style="left:1205px;top:869.5px;width:346.5px;height:1px;background:#a8a8a8;"></div>
<div style="left:1205px;top:880px;width:346.5px;height:1px;background:#a8a8a8;"></div>
<div style="left:1205px;top:898px;width:346.5px;height:1px;background:#a8a8a8;"></div>
<div style="left:1205px;top:916.2px;width:346.5px;height:1px;background:#a8a8a8;"></div>
<div style="left:1205px;top:934px;width:346.5px;height:1px;background:#a8a8a8;"></div>
<div style="left:1205px;top:951px;width:346.5px;height:1px;background:#111;"></div>
<div style="left:1205px;top:705px;width:1px;height:246px;background:#a8a8a8;"></div>
<div style="left:1550.5px;top:705px;width:1px;height:246px;background:#a8a8a8;"></div>
<div style="left:1272px;top:705px;width:1px;height:229px;background:#a8a8a8;"></div>
<div style="left:1397px;top:705px;width:1px;height:246px;background:#a8a8a8;"></div>
<div style="left:1453.5px;top:705px;width:1px;height:175px;background:#a8a8a8;"></div>
<div style="left:1453.5px;top:898px;width:1px;height:53px;background:#a8a8a8;"></div>
<div style="left:1524px;top:715px;width:1px;height:236px;background:#a8a8a8;"></div>
<div style="left:1397px;top:898px;width:127px;height:1px;background:#111;"></div>
<div style="left:1613px;top:650px;width:2.4px;height:5.5px;background:#7af0f0;"></div>
<div style="left:1222px;top:664px;width:2.4px;height:5.5px;background:#7af0f0;"></div>
<div style="left:1228px;top:664px;width:2.4px;height:5.5px;background:#7af0f0;"></div>
<div style="left:1238px;top:664px;width:2.4px;height:5.5px;background:#7af0f0;"></div>
<div style="left:1270px;top:664px;width:2.4px;height:5.5px;background:#7af0f0;"></div>
<div style="left:1298px;top:664px;width:2.4px;height:5.5px;background:#7af0f0;"></div>
<div style="left:1313px;top:664px;width:2.4px;height:5.5px;background:#7af0f0;"></div>
<div style="left:1328px;top:664px;width:2.4px;height:5.5px;background:#7af0f0;"></div>
<div style="left:1364px;top:664px;width:2.4px;height:5.5px;background:#7af0f0;"></div>
<div style="left:1502px;top:664px;width:2.4px;height:5.5px;background:#7af0f0;"></div>
<div style="left:1510px;top:664px;width:2.4px;height:5.5px;background:#7af0f0;"></div>
<div style="left:1231px;top:686.5px;width:2.4px;height:5.5px;background:#7af0f0;"></div>
<div style="left:1598px;top:687px;width:2.4px;height:5.5px;background:#7af0f0;"></div>
<div style="left:1604px;top:687px;width:2.4px;height:5.5px;background:#7af0f0;"></div>
<span id="t176" class="t" style="left:1212px;top:663px;font-size:5.4px;line-height:7px;color:#1e1e26;letter-spacing:0.019px;">/__   ? ?   ¡ =  Computer    dp cterdi (\\recerneir\employee$ (H:)    ART-376</span>
<span id="t177" class="t" style="left:1503px;top:663px;font-size:5.4px;line-height:7px;color:#1e1e26;letter-spacing:-0.281px;">+|  11  Searah ART-376</span>
<span id="t178" class="t" style="left:1198px;top:675.8px;font-size:5.4px;line-height:7px;color:#1e1e26;letter-spacing:-0.216px;">ile  Edit  View  Tools  Help</span>
<span id="t179" class="t" style="left:1208px;top:686px;font-size:5.4px;line-height:7px;color:#1e1e26;letter-spacing:-0.097px;">Organize    New fol der</span>
<span id="t180" class="t" style="left:1217px;top:704.2px;font-size:5.4px;line-height:7px;color:#1e1e26;letter-spacing:-0.146px;">Favorites</span>
<span id="t181" class="t" style="left:1273px;top:704.2px;font-size:5.4px;line-height:7px;color:#1e1e26;letter-spacing:-0.130px;">Name</span>
<span id="t182" class="t" style="left:1398px;top:704.2px;font-size:5.4px;line-height:7px;color:#1e1e26;letter-spacing:-0.105px;">Date modified</span>
<span id="t183" class="t" style="left:1454px;top:704.2px;font-size:5.4px;line-height:7px;color:#1e1e26;letter-spacing:-0.352px;">Type  Size</span>
<div style="left:1205.5px;top:717.1px;width:2.4px;height:5.5px;background:#7af0f0;"></div>
<span id="t184" class="t" style="left:1210px;top:716.6px;font-size:5.4px;line-height:7px;color:#1e1e26;letter-spacing:0.703px;">Desktop</span>
<div style="left:1273px;top:717.1px;width:2.4px;height:5.5px;background:#7af0f0;"></div>
<span id="t185" class="t" style="left:1277px;top:716.6px;font-size:5.4px;line-height:7px;color:#1e1e26;letter-spacing:-0.069px;">100 4179</span>
<span id="t186" class="t" style="left:1398px;top:716.6px;font-size:5.4px;line-height:7px;color:#1e1e26;letter-spacing:-0.098px;">5/26/2012 6:48 PM</span>
<span id="t187" class="t" style="left:1454.5px;top:716.6px;font-size:5.4px;line-height:7px;color:#1e1e26;letter-spacing:-0.474px;">JPEG image</span>
<span id="t188" class="t" style="left:1535px;top:716.6px;font-size:5.4px;line-height:7px;color:#1e1e26;letter-spacing:-0.537px;">140 KB</span>
<span id="t189" class="t" style="left:1229px;top:726.6px;font-size:5.4px;line-height:7px;color:#1e1e26;letter-spacing:-0.084px;">Downloads</span>
<div style="left:1273px;top:727.1px;width:2.4px;height:5.5px;background:#7af0f0;"></div>
<span id="t190" class="t" style="left:1277px;top:726.6px;font-size:5.4px;line-height:7px;color:#1e1e26;letter-spacing:-0.069px;">100 4180</span>
<span id="t191" class="t" style="left:1398px;top:726.6px;font-size:5.4px;line-height:7px;color:#1e1e26;letter-spacing:-0.098px;">5/26/2012 6:50 PM</span>
<span id="t192" class="t" style="left:1454.5px;top:726.6px;font-size:5.4px;line-height:7px;color:#1e1e26;letter-spacing:-0.474px;">JPEG image</span>
<span id="t193" class="t" style="left:1530px;top:726.6px;font-size:5.4px;line-height:7px;color:#1e1e26;letter-spacing:-0.312px;">1,032 KB</span>
<div style="left:1547px;top:727.1px;width:2.4px;height:5.5px;background:#7af0f0;"></div>
<div style="left:1224.5px;top:737.1px;width:2.4px;height:5.5px;background:#7af0f0;"></div>
<span id="t194" class="t" style="left:1229px;top:736.6px;font-size:5.4px;line-height:7px;color:#1e1e26;letter-spacing:-0.314px;">Recent Places</span>
<div style="left:1273px;top:737.1px;width:2.4px;height:5.5px;background:#7af0f0;"></div>
<span id="t195" class="t" style="left:1277px;top:736.6px;font-size:5.4px;line-height:7px;color:#1e1e26;letter-spacing:-0.069px;">100 4181</span>
<span id="t196" class="t" style="left:1398px;top:736.6px;font-size:5.4px;line-height:7px;color:#1e1e26;letter-spacing:-0.098px;">5/26/2012 6:50 PM</span>
<span id="t197" class="t" style="left:1454.5px;top:736.6px;font-size:5.4px;line-height:7px;color:#1e1e26;letter-spacing:-0.474px;">JPEG image</span>
<span id="t198" class="t" style="left:1530px;top:736.6px;font-size:5.4px;line-height:7px;color:#1e1e26;letter-spacing:-0.312px;">1,008 KB</span>
<div style="left:1273px;top:746.1px;width:2.4px;height:5.5px;background:#7af0f0;"></div>
<span id="t199" class="t" style="left:1277px;top:745.6px;font-size:5.4px;line-height:7px;color:#1e1e26;letter-spacing:-0.069px;">100 4182</span>
<span id="t200" class="t" style="left:1398px;top:745.6px;font-size:5.4px;line-height:7px;color:#1e1e26;letter-spacing:-0.098px;">5/26/2012 6:50 PM</span>
<span id="t201" class="t" style="left:1454.5px;top:745.6px;font-size:5.4px;line-height:7px;color:#1e1e26;letter-spacing:-0.474px;">JPEG image</span>
<span id="t202" class="t" style="left:1530px;top:745.6px;font-size:5.4px;line-height:7px;color:#1e1e26;letter-spacing:-0.312px;">1,060 KB</span>
<div style="left:1547px;top:746.1px;width:2.4px;height:5.5px;background:#7af0f0;"></div>
<div style="left:1205.5px;top:764.1px;width:2.4px;height:5.5px;background:#7af0f0;"></div>
<span id="t203" class="t" style="left:1210px;top:763.6px;font-size:5.4px;line-height:7px;color:#1e1e26;letter-spacing:-0.086px;">Libraries</span>
<div style="left:1273px;top:764.1px;width:2.4px;height:5.5px;background:#7af0f0;"></div>
<span id="t204" class="t" style="left:1277px;top:763.6px;font-size:5.4px;line-height:7px;color:#1e1e26;letter-spacing:-0.069px;">100 4183</span>
<span id="t205" class="t" style="left:1398px;top:763.6px;font-size:5.4px;line-height:7px;color:#1e1e26;letter-spacing:-0.098px;">5/26/2012 6:50 PM</span>
<span id="t206" class="t" style="left:1454.5px;top:763.6px;font-size:5.4px;line-height:7px;color:#1e1e26;letter-spacing:-0.474px;">JPEG image</span>
<span id="t207" class="t" style="left:1535px;top:763.6px;font-size:5.4px;line-height:7px;color:#1e1e26;letter-spacing:-0.537px;">921 KB</span>
<div style="left:1205.5px;top:774.5px;width:2.4px;height:5.5px;background:#7af0f0;"></div>
<span id="t208" class="t" style="left:1210px;top:774px;font-size:5.4px;line-height:7px;color:#1e1e26;letter-spacing:-0.033px;">Documents</span>
<div style="left:1273px;top:774.5px;width:2.4px;height:5.5px;background:#7af0f0;"></div>
<span id="t209" class="t" style="left:1277px;top:774px;font-size:5.4px;line-height:7px;color:#1e1e26;letter-spacing:-0.069px;">100 4184</span>
<span id="t210" class="t" style="left:1398px;top:774px;font-size:5.4px;line-height:7px;color:#1e1e26;letter-spacing:-0.098px;">5/26/2012 6:51 PM</span>
<span id="t211" class="t" style="left:1454.5px;top:774px;font-size:5.4px;line-height:7px;color:#1e1e26;letter-spacing:-0.474px;">JPEG image</span>
<span id="t212" class="t" style="left:1535px;top:774px;font-size:5.4px;line-height:7px;color:#1e1e26;letter-spacing:-0.537px;">988 KB</span>
<div style="left:1547px;top:774.5px;width:2.4px;height:5.5px;background:#7af0f0;"></div>
<span id="t213" class="t" style="left:1221px;top:783.6px;font-size:5.4px;line-height:7px;color:#1e1e26;letter-spacing:-0.270px;">Music</span>
<div style="left:1273px;top:784.1px;width:2.4px;height:5.5px;background:#7af0f0;"></div>
<span id="t214" class="t" style="left:1277px;top:783.6px;font-size:5.4px;line-height:7px;color:#1e1e26;letter-spacing:-0.069px;">100 4185</span>
<span id="t215" class="t" style="left:1398px;top:783.6px;font-size:5.4px;line-height:7px;color:#1e1e26;letter-spacing:-0.098px;">5/26/2012 6:51 PM</span>
<span id="t216" class="t" style="left:1454.5px;top:783.6px;font-size:5.4px;line-height:7px;color:#1e1e26;letter-spacing:-0.474px;">JPEG image</span>
<span id="t217" class="t" style="left:1530px;top:783.6px;font-size:5.4px;line-height:7px;color:#1e1e26;letter-spacing:-0.312px;">1,090 KB</span>
<div style="left:1206.5px;top:793.5px;width:2.4px;height:5.5px;background:#7af0f0;"></div>
<span id="t218" class="t" style="left:1211px;top:793px;font-size:5.4px;line-height:7px;color:#1e1e26;letter-spacing:-0.355px;">Pictures</span>
<span id="t219" class="t" style="left:1290px;top:793px;font-size:5.4px;line-height:7px;color:#1e1e26;letter-spacing:0.175px;">ART376|Quiz_Peters|2012</span>
<span id="t220" class="t" style="left:1398px;top:793px;font-size:5.4px;line-height:7px;color:#1e1e26;letter-spacing:-0.098px;">5/26/2012 7:09 PM</span>
<span id="t221" class="t" style="left:1454.5px;top:793px;font-size:5.4px;line-height:7px;color:#1e1e26;letter-spacing:-0.057px;">Microsoft Word D...</span>
<span id="t222" class="t" style="left:1535px;top:793px;font-size:5.4px;line-height:7px;color:#1e1e26;letter-spacing:-0.537px;">252 KB</span>
<div style="left:1547px;top:793.5px;width:2.4px;height:5.5px;background:#7af0f0;"></div>
<div style="left:1205.5px;top:804.1px;width:2.4px;height:5.5px;background:#7af0f0;"></div>
<span id="t223" class="t" style="left:1210px;top:803.6px;font-size:5.4px;line-height:7px;color:#1e1e26;letter-spacing:-0.078px;">Videos</span>
<div style="left:1273px;top:804.1px;width:2.4px;height:5.5px;background:#7af0f0;"></div>
<span id="t224" class="t" style="left:1277px;top:803.6px;font-size:5.4px;line-height:7px;color:#1e1e26;letter-spacing:0.069px;">Assignment A1 – Understanding Narrative</span>
<span id="t225" class="t" style="left:1398px;top:803.6px;font-size:5.4px;line-height:7px;color:#1e1e26;letter-spacing:-0.098px;">5/2/2012 10:41 PM</span>
<span id="t226" class="t" style="left:1454.5px;top:803.6px;font-size:5.4px;line-height:7px;color:#1e1e26;letter-spacing:-0.057px;">Microsoft Word D...</span>
<span id="t227" class="t" style="left:1535px;top:803.6px;font-size:5.4px;line-height:7px;color:#1e1e26;letter-spacing:-0.537px;">529 KB</span>
<span id="t228" class="t" style="left:1290px;top:813px;font-size:5.4px;line-height:7px;color:#1e1e26;letter-spacing:-0.069px;">Assignment A2 – Architectural Narratives</span>
<span id="t229" class="t" style="left:1398px;top:813px;font-size:5.4px;line-height:7px;color:#1e1e26;letter-spacing:-0.077px;">5/9/2012 9:11 PM</span>
<span id="t230" class="t" style="left:1454.5px;top:813px;font-size:5.4px;line-height:7px;color:#1e1e26;letter-spacing:-0.057px;">Microsoft Word D...</span>
<span id="t231" class="t" style="left:1535px;top:813px;font-size:5.4px;line-height:7px;color:#1e1e26;letter-spacing:0.078px;">14 KB</span>
<div style="left:1547px;top:813.5px;width:2.4px;height:5.5px;background:#7af0f0;"></div>
<span id="t232" class="t" style="left:1217px;top:831.6px;font-size:5.4px;line-height:7px;color:#1e1e26;letter-spacing:0.047px;">Computer</span>
<div style="left:1273px;top:832.1px;width:2.4px;height:5.5px;background:#7af0f0;"></div>
<span id="t233" class="t" style="left:1290px;top:831.6px;font-size:5.4px;line-height:7px;color:#1e1e26;letter-spacing:-0.151px;">Assignment A3 – Visual Elements</span>
<span id="t234" class="t" style="left:1398px;top:831.6px;font-size:5.4px;line-height:7px;color:#1e1e26;letter-spacing:-0.092px;">5/17/2012 10:35 PM</span>
<span id="t235" class="t" style="left:1454.5px;top:831.6px;font-size:5.4px;line-height:7px;color:#1e1e26;letter-spacing:-0.057px;">Microsoft Word D...</span>
<span id="t236" class="t" style="left:1535px;top:831.6px;font-size:5.4px;line-height:7px;color:#1e1e26;letter-spacing:0.078px;">13 KB</span>
<div style="left:1222.5px;top:842.1px;width:2.4px;height:5.5px;background:#7af0f0;"></div>
<span id="t237" class="t" style="left:1227px;top:841.6px;font-size:5.4px;line-height:7px;color:#1e1e26;letter-spacing:-0.096px;">Local Disk (CO</span>
<span id="t238" class="t" style="left:1277px;top:841.6px;font-size:5.4px;line-height:7px;color:#1e1e26;letter-spacing:0.095px;">Assignment A4 – Style + Narrative</span>
<span id="t239" class="t" style="left:1398px;top:841.6px;font-size:5.4px;line-height:7px;color:#1e1e26;letter-spacing:-0.098px;">5/25/2012 7:05 PM</span>
<span id="t240" class="t" style="left:1454.5px;top:841.6px;font-size:5.4px;line-height:7px;color:#1e1e26;letter-spacing:-0.057px;">Microsoft Word D...</span>
<span id="t241" class="t" style="left:1535px;top:841.6px;font-size:5.4px;line-height:7px;color:#1e1e26;letter-spacing:0.078px;">13 KB</span>
<div style="left:1547px;top:842.1px;width:2.4px;height:5.5px;background:#7af0f0;"></div>
<span id="t242" class="t" style="left:1221px;top:851px;font-size:5.4px;line-height:7px;color:#1e1e26;letter-spacing:-0.008px;">infotech$ (\\reserve</span>
<svg style="left:1221px;top:856.2px;" width="47" height="4" viewBox="0 0 47 4"><path d="M0 2.8L1.5 0.8L3.0 2.8L4.5 0.8L6.0 2.8L7.5 0.8L9.0 2.8L10.5 0.8L12.0 2.8L13.5 0.8L15.0 2.8L16.5 0.8L18.0 2.8L19.5 0.8L21.0 2.8L22.5 0.8L24.0 2.8L25.5 0.8L27.0 2.8L28.5 0.8L30.0 2.8L31.5 0.8L33.0 2.8L34.5 0.8L36.0 2.8L37.5 0.8L39.0 2.8L40.5 0.8L42.0 2.8L43.5 0.8L45.0 2.8" fill="none" stroke="#e03a3a" stroke-width=".9"/></svg>
<div style="left:1273px;top:851.5px;width:2.4px;height:5.5px;background:#7af0f0;"></div>
<span id="t243" class="t" style="left:1290px;top:851px;font-size:5.4px;line-height:7px;color:#1e1e26;letter-spacing:-0.072px;">Dax Peters – Research Project</span>
<span id="t244" class="t" style="left:1398px;top:851px;font-size:5.4px;line-height:7px;color:#1e1e26;letter-spacing:-0.098px;">5/22/2012 4:28 PM</span>
<span id="t245" class="t" style="left:1454.5px;top:851px;font-size:5.4px;line-height:7px;color:#1e1e26;letter-spacing:-0.057px;">Microsoft Word D...</span>
<span id="t246" class="t" style="left:1535px;top:851px;font-size:5.4px;line-height:7px;color:#1e1e26;letter-spacing:-0.537px;">209 KB</span>
<div style="left:1205.5px;top:861.1px;width:2.4px;height:5.5px;background:#7af0f0;"></div>
<span id="t247" class="t" style="left:1210px;top:860.6px;font-size:5.4px;line-height:7px;color:#1e1e26;letter-spacing:-0.237px;">dpeterdi (\\recervoir</span>
<span id="t248" class="t" style="left:1277px;top:860.6px;font-size:5.4px;line-height:7px;color:#1e1e26;letter-spacing:0.333px;">IMG 5380</span>
<span id="t249" class="t" style="left:1398px;top:860.6px;font-size:5.4px;line-height:7px;color:#1e1e26;letter-spacing:-0.104px;">5/9/2012 8:40 PM</span>
<span id="t250" class="t" style="left:1454.5px;top:860.6px;font-size:5.4px;line-height:7px;color:#1e1e26;letter-spacing:-0.474px;">JPEG image</span>
<span id="t251" class="t" style="left:1535px;top:860.6px;font-size:5.4px;line-height:7px;color:#1e1e26;letter-spacing:-0.537px;">165 KB</span>
<div style="left:1547px;top:861.1px;width:2.4px;height:5.5px;background:#7af0f0;"></div>
<span id="t252" class="t" style="left:1221px;top:870.6px;font-size:5.4px;line-height:7px;color:#1e1e26;letter-spacing:0.077px;">datatel$ (\\recervoir</span>
<svg style="left:1221px;top:875.8000000000001px;" width="49" height="4" viewBox="0 0 49 4"><path d="M0 2.8L1.5 0.8L3.0 2.8L4.5 0.8L6.0 2.8L7.5 0.8L9.0 2.8L10.5 0.8L12.0 2.8L13.5 0.8L15.0 2.8L16.5 0.8L18.0 2.8L19.5 0.8L21.0 2.8L22.5 0.8L24.0 2.8L25.5 0.8L27.0 2.8L28.5 0.8L30.0 2.8L31.5 0.8L33.0 2.8L34.5 0.8L36.0 2.8L37.5 0.8L39.0 2.8L40.5 0.8L42.0 2.8L43.5 0.8L45.0 2.8L46.5 0.8L48.0 2.8" fill="none" stroke="#e03a3a" stroke-width=".9"/></svg>
<div style="left:1273px;top:871.1px;width:2.4px;height:5.5px;background:#7af0f0;"></div>
<span id="t253" class="t" style="left:1290px;top:870.6px;font-size:5.4px;line-height:7px;color:#1e1e26;letter-spacing:-0.047px;">Mid Term – Documenting Artwork and L...</span>
<span id="t254" class="t" style="left:1398px;top:870.6px;font-size:5.4px;line-height:7px;color:#1e1e26;letter-spacing:-0.098px;">5/26/2012 7:03 PM</span>
<span id="t255" class="t" style="left:1454.5px;top:870.6px;font-size:5.4px;line-height:7px;color:#1e1e26;letter-spacing:-0.057px;">Microsoft Word D...</span>
<span id="t256" class="t" style="left:1535px;top:870.6px;font-size:5.4px;line-height:7px;color:#1e1e26;letter-spacing:-0.537px;">231 KB</span>
<span id="t257" class="t" style="left:1221px;top:880.5px;font-size:5.4px;line-height:7px;color:#1e1e26;letter-spacing:-0.092px;">scripts (\\ju.edu\SYS</span>
<div style="left:1239px;top:881px;width:2.4px;height:5.5px;background:#7af0f0;"></div>
<span id="t258" class="t" style="left:1460px;top:880.5px;font-size:5.4px;line-height:7px;color:#1e1e26;letter-spacing:-0.153px;">Capture Image Print Screen</span>
<span id="t259" class="t" style="left:1210px;top:899.2px;font-size:5.4px;line-height:7px;color:#1e1e26;letter-spacing:0.036px;">Network</span>
<div style="left:1206px;top:899.7px;width:2.4px;height:5.5px;background:#7af0f0;"></div>
<span id="t260" class="t" style="left:1234px;top:915.5px;font-size:5.4px;line-height:7px;color:#1e1e26;letter-spacing:-0.196px;">15 items</span>
<div style="left:1230px;top:916px;width:2px;height:5.5px;background:#7af0f0;"></div>
<span id="t261" class="t" style="left:1273px;top:915.5px;font-size:5.4px;line-height:7px;color:#1e1e26;letter-spacing:-0.141px;">Offline status: Online</span>
<span id="t262" class="t" style="left:1212px;top:933.5px;font-size:5.4px;line-height:7px;color:#1e1e26;letter-spacing:-0.059px;">Offline availability: Not available</span>
<div style="left:1206px;top:934px;width:2.4px;height:5.5px;background:#7af0f0;"></div>
</body></html>
